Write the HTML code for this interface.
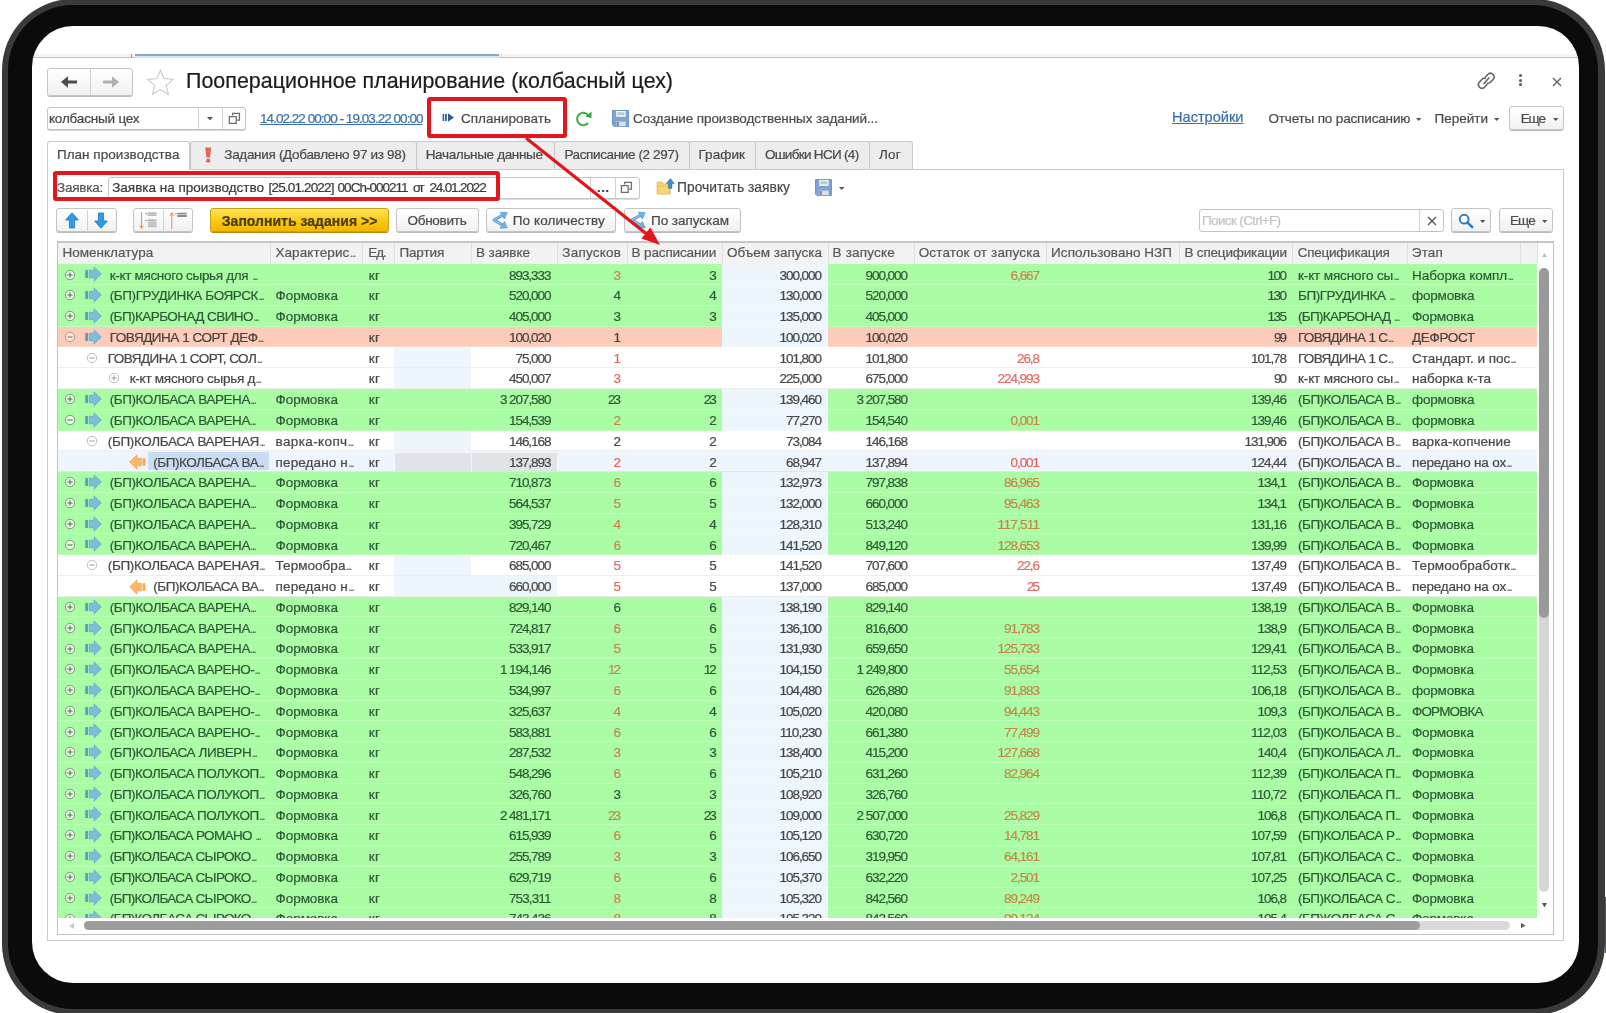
<!DOCTYPE html>
<html lang="ru"><head><meta charset="utf-8"><title>Пооперационное планирование</title>
<style>
html,body{margin:0;padding:0;background:#fff}
body{width:1606px;height:1013px;position:relative;overflow:hidden;font-family:"Liberation Sans",Arial,sans-serif;font-size:13.5px;-webkit-text-stroke:0.22px currentColor}
#tablet{position:absolute;left:1.5px;top:-1px;width:1603px;height:1015.7px;background:#3a3a3a;border-radius:71px}
#tablet2{position:absolute;left:8px;top:4.7px;width:1590px;height:1004.3px;background:#0b0b0b;border-radius:65px}
#btn{position:absolute;left:1604.5px;top:897px;width:1.5px;height:56px;background:#5a5f66}
#screen{position:absolute;left:32px;top:26px;width:1547px;height:957px;background:#fff;border-radius:41px;overflow:hidden}
#in{position:absolute;left:-32px;top:-26px;width:1606px;height:1013px;will-change:transform}
.e{font-size:11.5px;letter-spacing:-1.6px;margin-left:0.4px;opacity:.8}
</style></head><body>
<div id="tablet"></div><div id="tablet2"></div><div id="btn"></div>
<div id="screen"><div id="in">
<div style="position:absolute;left:32.0px;top:54.0px;width:1547.0px;height:3.0px;background:#f3f3f3"></div>
<div style="position:absolute;left:32.0px;top:57.0px;width:1547.0px;height:1.0px;background:#c2c2c2"></div>
<div style="position:absolute;left:134.6px;top:54.0px;width:364.4px;height:2.0px;background:#8ea7bd"></div>
<div style="position:absolute;left:134.6px;top:56.0px;width:364.4px;height:2.0px;background:#d6e4ef"></div>
<div style="position:absolute;left:131.0px;top:54.0px;width:1.0px;height:4.0px;background:#999"></div>
<div style="position:absolute;left:501.0px;top:54.0px;width:1.0px;height:4.0px;background:#ccc"></div>
<div style="position:absolute;left:47.0px;top:67.5px;width:85.5px;height:28.0px;box-sizing:border-box;border:1px solid #c3c3c3;border-radius:3px;background:linear-gradient(#ffffff,#f1f1f1);box-shadow:0 1px 0 #b9b9b9;"></div>
<div style="position:absolute;left:90.0px;top:68.5px;width:1.0px;height:26.0px;background:#d0d0d0"></div>
<svg style="position:absolute;left:60.0px;top:75.0px" width="18" height="14" viewBox="0 0 18 14"><path d="M1 7L8 1.2V5.4H17V8.6H8V12.8Z" fill="#4a4a4a"/></svg>
<svg style="position:absolute;left:102.0px;top:75.0px" width="18" height="14" viewBox="0 0 18 14"><path d="M17 7L10 1.2V5.4H1V8.6H10V12.8Z" fill="#b0b0b0"/></svg>
<svg style="position:absolute;left:145.5px;top:67.5px" width="29" height="28" viewBox="0 0 29 28"><path d="M14.5 2.2L18.1 10.6L27.2 11.4L20.3 17.4L22.4 26.3L14.5 21.6L6.6 26.3L8.7 17.4L1.8 11.4L10.9 10.6Z" fill="none" stroke="#c9c9c9" stroke-width="1.1" stroke-linejoin="miter"/></svg>
<div style="position:absolute;left:186.0px;top:71.48px;font-size:21.4px;line-height:1;color:#1c1c1c;white-space:pre;letter-spacing:0.039px;">Пооперационное планирование (колбасный цех)</div>
<svg style="position:absolute;left:1474.5px;top:70.2px" width="22" height="20.9" viewBox="0 0 20 19"><g fill="none" stroke="#666" stroke-width="1.45" stroke-linecap="round"><path d="M8.2 12.3L12.6 7.2"/><path d="M9.6 6.4L11.6 4.1A3.3 3.3 0 0 1 16.6 8.4L14.3 11A3.3 3.3 0 0 1 11.2 12"/><path d="M10.9 13.2L8.9 15.5A3.3 3.3 0 0 1 3.9 11.2L6.2 8.6A3.3 3.3 0 0 1 9.3 7.6"/></g></svg>
<div style="position:absolute;left:1519.2px;top:74.0px;width:3.0px;height:3.0px;background:#5a5a5a;border-radius:50%"></div>
<div style="position:absolute;left:1519.2px;top:78.5px;width:3.0px;height:3.0px;background:#5a5a5a;border-radius:50%"></div>
<div style="position:absolute;left:1519.2px;top:83.0px;width:3.0px;height:3.0px;background:#5a5a5a;border-radius:50%"></div>
<svg style="position:absolute;left:1551.5px;top:76.5px" width="10" height="10" viewBox="0 0 10 10"><path d="M1 1L9 9M9 1L1 9" stroke="#6a6a6a" stroke-width="1.5" fill="none"/></svg>
<div style="position:absolute;left:47.0px;top:107.0px;width:199.0px;height:23.0px;box-sizing:border-box;border:1px solid #c3c3c3;border-radius:3px;background:#fff;box-shadow:0 1px 0 #d5d5d5"></div>
<div style="position:absolute;left:198.0px;top:108.0px;width:1.0px;height:21.0px;background:#d0d0d0"></div>
<div style="position:absolute;left:222.0px;top:108.0px;width:1.0px;height:21.0px;background:#d0d0d0"></div>
<div style="position:absolute;left:49.0px;top:111.87px;font-size:13.5px;line-height:1;color:#474747;white-space:pre;letter-spacing:-0.186px;">колбасный цех</div>
<svg style="position:absolute;left:206.5px;top:116.9px" width="6" height="3.4" viewBox="0 0 6 3.4"><path d="M0 0H6L3.0 3.4Z" fill="#555"/></svg>
<svg style="position:absolute;left:227.6px;top:111.6px" width="13" height="13" viewBox="0 0 13 13"><g fill="none" stroke="#6f6f6f" stroke-width="1.3"><path d="M4.6 3.6V1.4H11.4V8.2H9"/><rect x="1.4" y="4.6" width="6.8" height="6.8" fill="#fff"/></g></svg>
<div style="position:absolute;left:260.0px;top:111.87px;font-size:13.5px;line-height:1;color:#3a6fb0;white-space:pre;letter-spacing:-0.956px;text-decoration:underline;">14.02.22 00:00 - 19.03.22 00:00</div>
<div style="position:absolute;left:426.5px;top:97.0px;width:140.0px;height:41.0px;box-sizing:border-box;border:4px solid #e2161c;border-radius:3px"></div>
<svg style="position:absolute;left:441.5px;top:112.0px" width="13" height="11" viewBox="0 0 13 11"><rect x="0.6" y="2" width="1.6" height="7" fill="#2f5f94"/><rect x="3.1" y="2" width="1.8" height="7" fill="#2f5f94"/><path d="M6 1.2L12 5.5L6 9.8Z" fill="#2f5f94"/></svg>
<div style="position:absolute;left:461.0px;top:111.87px;font-size:13.5px;line-height:1;color:#4b4b4b;white-space:pre;letter-spacing:0.009px;">Спланировать</div>
<svg style="position:absolute;left:574.0px;top:109.7px" width="19" height="18" viewBox="0 0 19 18"><path d="M14.05 12.99A6.2 6.2 0 1 1 14.05 5.01" fill="none" stroke="#47ab48" stroke-width="2.1"/><path d="M11.4 6.6L17.6 1.6L17.4 8.3Z" fill="#3da33f"/></svg>
<svg style="position:absolute;left:611.8px;top:110.0px" width="17" height="17" viewBox="0 0 17 17"><path d="M0.5 0.5H16.5V16.5H2L0.5 15Z" fill="#7fa3d3" stroke="#6a8fc5" stroke-width="0.9"/><rect x="4.2" y="1" width="9.4" height="5.8" fill="#f4f7fb"/><rect x="5.4" y="2.2" width="7" height="3" fill="#b9c8de"/><rect x="4.6" y="11.6" width="9" height="4.6" fill="#dcdfe4"/><rect x="5.2" y="12" width="1.4" height="4" fill="#4c6a94"/></svg>
<div style="position:absolute;left:633.0px;top:111.87px;font-size:13.5px;line-height:1;color:#4b4b4b;white-space:pre;letter-spacing:-0.093px;">Создание производственных заданий...</div>
<div style="position:absolute;left:1172.0px;top:109.94px;font-size:14.6px;line-height:1;color:#3a6fa8;white-space:pre;letter-spacing:-0.008px;text-decoration:underline;">Настройки</div>
<div style="position:absolute;left:1268.4px;top:111.87px;font-size:13.5px;line-height:1;color:#4b4b4b;white-space:pre;letter-spacing:-0.157px;">Отчеты по расписанию</div>
<svg style="position:absolute;left:1416.3px;top:118.0px" width="5.4" height="3" viewBox="0 0 5.4 3"><path d="M0 0H5.4L2.7 3Z" fill="#555"/></svg>
<div style="position:absolute;left:1434.5px;top:111.87px;font-size:13.5px;line-height:1;color:#4b4b4b;white-space:pre;letter-spacing:0.000px;">Перейти</div>
<svg style="position:absolute;left:1493.8px;top:118.0px" width="5.4" height="3" viewBox="0 0 5.4 3"><path d="M0 0H5.4L2.7 3Z" fill="#555"/></svg>
<div style="position:absolute;left:1509.0px;top:106.0px;width:54.5px;height:24.0px;box-sizing:border-box;border:1px solid #c3c3c3;border-radius:3px;background:linear-gradient(#ffffff,#f1f1f1);box-shadow:0 1px 0 #b9b9b9;"></div>
<div style="position:absolute;left:1520.7px;top:111.87px;font-size:13.5px;line-height:1;color:#4b4b4b;white-space:pre;letter-spacing:-1.084px;">Еще</div>
<svg style="position:absolute;left:1552.8px;top:118.0px" width="5.4" height="3" viewBox="0 0 5.4 3"><path d="M0 0H5.4L2.7 3Z" fill="#555"/></svg>
<div style="position:absolute;left:46.5px;top:169.0px;width:1517.0px;height:771.5px;box-sizing:border-box;border:1px solid #c9c9c9;background:#fff"></div>
<div style="position:absolute;left:190.0px;top:140.5px;width:226.5px;height:28.5px;box-sizing:border-box;border:1px solid #c9c9c9;border-bottom:none;border-radius:3px 3px 0 0;background:#ededed"></div>
<div style="position:absolute;left:415.5px;top:140.5px;width:139.5px;height:28.5px;box-sizing:border-box;border:1px solid #c9c9c9;border-bottom:none;border-radius:3px 3px 0 0;background:#ededed"></div>
<div style="position:absolute;left:554.0px;top:140.5px;width:136.0px;height:28.5px;box-sizing:border-box;border:1px solid #c9c9c9;border-bottom:none;border-radius:3px 3px 0 0;background:#ededed"></div>
<div style="position:absolute;left:689.0px;top:140.5px;width:67.0px;height:28.5px;box-sizing:border-box;border:1px solid #c9c9c9;border-bottom:none;border-radius:3px 3px 0 0;background:#ededed"></div>
<div style="position:absolute;left:755.0px;top:140.5px;width:115.0px;height:28.5px;box-sizing:border-box;border:1px solid #c9c9c9;border-bottom:none;border-radius:3px 3px 0 0;background:#ededed"></div>
<div style="position:absolute;left:869.0px;top:140.5px;width:43.5px;height:28.5px;box-sizing:border-box;border:1px solid #c9c9c9;border-bottom:none;border-radius:3px 3px 0 0;background:#ededed"></div>
<div style="position:absolute;left:46.5px;top:140.5px;width:143.5px;height:29.5px;box-sizing:border-box;border:1px solid #c9c9c9;border-bottom:none;border-radius:3px 3px 0 0;background:#fff"></div>
<div style="position:absolute;left:56.9px;top:148.37px;font-size:13.5px;line-height:1;color:#4b4b4b;white-space:pre;letter-spacing:0.036px;">План производства</div>
<svg style="position:absolute;left:203.0px;top:145.5px" width="10" height="19" viewBox="0 0 10 19"><path d="M2.2 1.6H8.2L7 11.4H3.4Z" fill="#e8645a"/><rect x="3.2" y="12.8" width="4" height="3.6" rx="1.2" fill="#e8645a"/></svg>
<div style="position:absolute;left:224.3px;top:148.37px;font-size:13.5px;line-height:1;color:#4b4b4b;white-space:pre;letter-spacing:-0.310px;">Задания (Добавлено 97 из 98)</div>
<div style="position:absolute;left:425.7px;top:148.37px;font-size:13.5px;line-height:1;color:#4b4b4b;white-space:pre;letter-spacing:-0.336px;">Начальные данные</div>
<div style="position:absolute;left:564.4px;top:148.37px;font-size:13.5px;line-height:1;color:#4b4b4b;white-space:pre;letter-spacing:-0.374px;">Расписание (2 297)</div>
<div style="position:absolute;left:698.4px;top:148.37px;font-size:13.5px;line-height:1;color:#4b4b4b;white-space:pre;letter-spacing:0.095px;">График</div>
<div style="position:absolute;left:764.9px;top:148.37px;font-size:13.5px;line-height:1;color:#4b4b4b;white-space:pre;letter-spacing:-0.690px;">Ошибки НСИ (4)</div>
<div style="position:absolute;left:879.0px;top:148.37px;font-size:13.5px;line-height:1;color:#4b4b4b;white-space:pre;letter-spacing:0.252px;">Лог</div>
<div style="position:absolute;left:57.0px;top:180.87px;font-size:13.5px;line-height:1;color:#555;white-space:pre;letter-spacing:-0.235px;">Заявка:</div>
<div style="position:absolute;left:108.0px;top:176.5px;width:532.0px;height:22.5px;box-sizing:border-box;border:1px solid #c6c6c6;border-radius:3px;background:#fff;box-shadow:0 1px 0 #dcdcdc"></div>
<div style="position:absolute;left:590.0px;top:177.5px;width:1.0px;height:20.5px;background:#d0d0d0"></div>
<div style="position:absolute;left:615.0px;top:177.5px;width:1.0px;height:20.5px;background:#d0d0d0"></div>
<div style="position:absolute;left:112.2px;top:180.87px;font-size:13.5px;line-height:1;color:#3a3a3a;white-space:pre;letter-spacing:-0.003px;">Заявка на производство</div>
<div style="position:absolute;left:268.6px;top:180.87px;font-size:13.5px;line-height:1;color:#3a3a3a;white-space:pre;letter-spacing:-0.843px;">[25.01.2022]</div>
<div style="position:absolute;left:337.6px;top:180.87px;font-size:13.5px;line-height:1;color:#3a3a3a;white-space:pre;letter-spacing:-0.983px;">00Ch-000211</div>
<div style="position:absolute;left:413.0px;top:180.87px;font-size:13.5px;line-height:1;color:#3a3a3a;white-space:pre;letter-spacing:-1.606px;">от</div>
<div style="position:absolute;left:429.4px;top:180.87px;font-size:13.5px;line-height:1;color:#3a3a3a;white-space:pre;letter-spacing:-1.142px;">24.01.2022</div>
<div style="position:absolute;left:597.0px;top:181.37px;font-size:13.5px;line-height:1;color:#444;white-space:pre;font-weight:bold;letter-spacing:0.4px;">...</div>
<svg style="position:absolute;left:620.3px;top:180.6px" width="13" height="13" viewBox="0 0 13 13"><g fill="none" stroke="#6f6f6f" stroke-width="1.3"><path d="M4.6 3.6V1.4H11.4V8.2H9"/><rect x="1.4" y="4.6" width="6.8" height="6.8" fill="#fff"/></g></svg>
<div style="position:absolute;left:52.5px;top:170.5px;width:447.5px;height:30.0px;box-sizing:border-box;border:4px solid #e2161c;border-radius:3px"></div>
<svg style="position:absolute;left:656.0px;top:177.5px" width="19" height="18" viewBox="0 0 19 18"><path d="M1.2 4.2H6L7.4 6H14V16H1.2Z" fill="#f6d572" stroke="#e2b84a" stroke-width="0.9"/><path d="M1.6 8.4H13.6" stroke="#e9c45c" stroke-width="0.9"/><path d="M14.4 0.6L18.4 5.6H16V10.4H12.6V5.6H10.2Z" fill="#3f8bd0" stroke="#2c6fb0" stroke-width="0.5"/></svg>
<div style="position:absolute;left:677.0px;top:181.12px;font-size:13.8px;line-height:1;color:#4b4b4b;white-space:pre;letter-spacing:0.025px;">Прочитать заявку</div>
<svg style="position:absolute;left:815.0px;top:179.2px" width="17" height="17" viewBox="0 0 17 17"><path d="M0.5 0.5H16.5V16.5H2L0.5 15Z" fill="#7fa3d3" stroke="#6a8fc5" stroke-width="0.9"/><rect x="4.2" y="1" width="9.4" height="5.8" fill="#f4f7fb"/><rect x="5.4" y="2.2" width="7" height="3" fill="#b9c8de"/><rect x="4.6" y="11.6" width="9" height="4.6" fill="#dcdfe4"/><rect x="5.2" y="12" width="1.4" height="4" fill="#4c6a94"/></svg>
<svg style="position:absolute;left:838.5px;top:187.0px" width="5.4" height="3" viewBox="0 0 5.4 3"><path d="M0 0H5.4L2.7 3Z" fill="#555"/></svg>
<div style="position:absolute;left:56.4px;top:208.0px;width:60.4px;height:24.0px;box-sizing:border-box;border:1px solid #c3c3c3;border-radius:3px;background:linear-gradient(#ffffff,#f1f1f1);box-shadow:0 1px 0 #b9b9b9;"></div>
<div style="position:absolute;left:86.6px;top:209.5px;width:1.0px;height:22.0px;background:#d0d0d0"></div>
<svg style="position:absolute;left:64.5px;top:212.0px" width="14" height="17" viewBox="0 0 14 17"><path d="M7 0.8L13.4 8H9.6V16H4.4V8H0.6Z" fill="#2f9be6" stroke="#1f78c0" stroke-width="0.8"/></svg>
<svg style="position:absolute;left:94.0px;top:212.0px" width="14" height="17" viewBox="0 0 14 17"><path d="M7 16.2L13.4 9H9.6V1H4.4V9H0.6Z" fill="#2f9be6" stroke="#1f78c0" stroke-width="0.8"/></svg>
<div style="position:absolute;left:133.0px;top:208.0px;width:60.4px;height:24.0px;box-sizing:border-box;border:1px solid #c3c3c3;border-radius:3px;background:linear-gradient(#ffffff,#f1f1f1);box-shadow:0 1px 0 #b9b9b9;"></div>
<div style="position:absolute;left:163.3px;top:209.5px;width:1.0px;height:22.0px;background:#d0d0d0"></div>
<svg style="position:absolute;left:139.0px;top:211.0px" width="20" height="19" viewBox="0 0 20 19"><path d="M2.6 1V17M0.8 14.5L2.6 17.5L4.4 14.5" stroke="#ee8a4a" stroke-width="1" fill="none"/><g fill="#8a8a8a"><rect x="6.5" y="2" width="1.3" height="1.3"/><rect x="8.5" y="1.6" width="9" height="1"/><rect x="8.5" y="3.6" width="9" height="1"/><rect x="6.5" y="9" width="1.3" height="1.3"/><rect x="8.5" y="8.6" width="9" height="1"/><rect x="9" y="10.4" width="8.5" height="6" fill="#c4c4c4"/></g></svg>
<svg style="position:absolute;left:168.5px;top:211.0px" width="20" height="19" viewBox="0 0 20 19"><path d="M2.8 18V2M1 4.8L2.8 1.6L4.6 4.8" stroke="#ee8a4a" stroke-width="1" fill="none"/><g fill="#8a8a8a"><rect x="6.3" y="2.2" width="1.3" height="1.3"/><rect x="8.3" y="1.8" width="9.5" height="1.2"/><rect x="8.3" y="3.6" width="9.5" height="2.4"/></g></svg>
<div style="position:absolute;left:210.0px;top:208.0px;width:179.0px;height:24.0px;box-sizing:border-box;border:1px solid #c79f10;border-radius:3px;background:linear-gradient(#ffe45a,#fbc90f 55%,#f3b600);box-shadow:0 1px 0 #b48e0a"></div>
<div style="position:absolute;left:221.8px;top:213.95px;font-size:14px;line-height:1;color:#4a3c0a;white-space:pre;letter-spacing:0.019px;font-weight:bold;">Заполнить задания &gt;&gt;</div>
<div style="position:absolute;left:396.0px;top:208.0px;width:82.5px;height:24.0px;box-sizing:border-box;border:1px solid #c3c3c3;border-radius:3px;background:linear-gradient(#ffffff,#f1f1f1);box-shadow:0 1px 0 #b9b9b9;"></div>
<div style="position:absolute;left:407.5px;top:214.37px;font-size:13.5px;line-height:1;color:#4b4b4b;white-space:pre;letter-spacing:-0.277px;">Обновить</div>
<div style="position:absolute;left:485.5px;top:208.0px;width:130.5px;height:24.0px;box-sizing:border-box;border:1px solid #c3c3c3;border-radius:3px;background:linear-gradient(#ffffff,#f1f1f1);box-shadow:0 1px 0 #b9b9b9;"></div>
<svg style="position:absolute;left:491.3px;top:211.3px" width="18" height="18.4" viewBox="0 0 18 18.4"><path d="M12 4L3 9L12 14.6" fill="none" stroke="#4f98d2" stroke-width="3" stroke-linejoin="round"/><path d="M12 4L3 9L12 14.6" fill="none" stroke="#8cc4ea" stroke-width="1.4" stroke-linejoin="round"/><path d="M9.2 1.2L16.2 1.6L13.4 8Z" fill="#6fb2e3" stroke="#4f98d2" stroke-width="0.7"/><path d="M9.2 17.2L16.2 16.8L13.4 10.6Z" fill="#6fb2e3" stroke="#4f98d2" stroke-width="0.7"/></svg>
<div style="position:absolute;left:512.8px;top:214.37px;font-size:13.5px;line-height:1;color:#4b4b4b;white-space:pre;letter-spacing:0.096px;">По количеству</div>
<div style="position:absolute;left:623.5px;top:208.0px;width:117.5px;height:24.0px;box-sizing:border-box;border:1px solid #c3c3c3;border-radius:3px;background:linear-gradient(#ffffff,#f1f1f1);box-shadow:0 1px 0 #b9b9b9;"></div>
<svg style="position:absolute;left:629.3px;top:211.3px" width="18" height="18.4" viewBox="0 0 18 18.4"><path d="M12 4L3 9L12 14.6" fill="none" stroke="#4f98d2" stroke-width="3" stroke-linejoin="round"/><path d="M12 4L3 9L12 14.6" fill="none" stroke="#8cc4ea" stroke-width="1.4" stroke-linejoin="round"/><path d="M9.2 1.2L16.2 1.6L13.4 8Z" fill="#6fb2e3" stroke="#4f98d2" stroke-width="0.7"/><path d="M9.2 17.2L16.2 16.8L13.4 10.6Z" fill="#6fb2e3" stroke="#4f98d2" stroke-width="0.7"/></svg>
<div style="position:absolute;left:651.0px;top:214.37px;font-size:13.5px;line-height:1;color:#4b4b4b;white-space:pre;letter-spacing:-0.031px;">По запускам</div>
<div style="position:absolute;left:1198.7px;top:209.0px;width:245.0px;height:23.0px;box-sizing:border-box;border:1px solid #c3c3c3;border-radius:3px;background:#fff"></div>
<div style="position:absolute;left:1418.6px;top:210.0px;width:1.0px;height:21.0px;background:#d0d0d0"></div>
<div style="position:absolute;left:1202.0px;top:214.37px;font-size:13.5px;line-height:1;color:#c4c4c4;white-space:pre;letter-spacing:-0.637px;">Поиск (Ctrl+F)</div>
<svg style="position:absolute;left:1426.5px;top:216.0px" width="10" height="10" viewBox="0 0 10 10"><path d="M1 1L9 9M9 1L1 9" stroke="#555" stroke-width="1.4" fill="none"/></svg>
<div style="position:absolute;left:1451.0px;top:208.0px;width:40.0px;height:24.0px;box-sizing:border-box;border:1px solid #c3c3c3;border-radius:3px;background:linear-gradient(#ffffff,#f1f1f1);box-shadow:0 1px 0 #b9b9b9;"></div>
<svg style="position:absolute;left:1457.5px;top:212.5px" width="16" height="16" viewBox="0 0 16 16"><circle cx="6.2" cy="6.2" r="4.4" fill="#fff" stroke="#2f7cc4" stroke-width="2"/><path d="M9.6 9.6L14.2 14.2" stroke="#2f7cc4" stroke-width="2.6" stroke-linecap="round"/></svg>
<svg style="position:absolute;left:1480.3px;top:220.0px" width="5.4" height="3" viewBox="0 0 5.4 3"><path d="M0 0H5.4L2.7 3Z" fill="#555"/></svg>
<div style="position:absolute;left:1498.8px;top:208.0px;width:54.2px;height:24.0px;box-sizing:border-box;border:1px solid #c3c3c3;border-radius:3px;background:linear-gradient(#ffffff,#f1f1f1);box-shadow:0 1px 0 #b9b9b9;"></div>
<div style="position:absolute;left:1510.0px;top:214.37px;font-size:13.5px;line-height:1;color:#4b4b4b;white-space:pre;letter-spacing:-0.884px;">Еще</div>
<svg style="position:absolute;left:1542.3px;top:220.0px" width="5.4" height="3" viewBox="0 0 5.4 3"><path d="M0 0H5.4L2.7 3Z" fill="#555"/></svg>
<div style="position:absolute;left:56.5px;top:241.0px;width:1497.0px;height:693.5px;box-sizing:border-box;border:1px solid #c2c2c2;border-top:2px solid #c6c6c6;background:#fff"></div>
<div style="position:absolute;left:57.5px;top:243.0px;width:1479.1px;height:21.0px;background:#f2f2f2"></div>
<div style="position:absolute;left:270.0px;top:243.0px;width:1.0px;height:20.0px;background:#dedede"></div>
<div style="position:absolute;left:362.0px;top:243.0px;width:1.0px;height:20.0px;background:#dedede"></div>
<div style="position:absolute;left:394.0px;top:243.0px;width:1.0px;height:20.0px;background:#dedede"></div>
<div style="position:absolute;left:471.0px;top:243.0px;width:1.0px;height:20.0px;background:#dedede"></div>
<div style="position:absolute;left:557.0px;top:243.0px;width:1.0px;height:20.0px;background:#dedede"></div>
<div style="position:absolute;left:627.0px;top:243.0px;width:1.0px;height:20.0px;background:#dedede"></div>
<div style="position:absolute;left:722.0px;top:243.0px;width:1.0px;height:20.0px;background:#dedede"></div>
<div style="position:absolute;left:828.0px;top:243.0px;width:1.0px;height:20.0px;background:#dedede"></div>
<div style="position:absolute;left:914.0px;top:243.0px;width:1.0px;height:20.0px;background:#dedede"></div>
<div style="position:absolute;left:1046.0px;top:243.0px;width:1.0px;height:20.0px;background:#dedede"></div>
<div style="position:absolute;left:1179.0px;top:243.0px;width:1.0px;height:20.0px;background:#dedede"></div>
<div style="position:absolute;left:1292.0px;top:243.0px;width:1.0px;height:20.0px;background:#dedede"></div>
<div style="position:absolute;left:1407.0px;top:243.0px;width:1.0px;height:20.0px;background:#dedede"></div>
<div style="position:absolute;left:1520.0px;top:243.0px;width:1.0px;height:20.0px;background:#dedede"></div>
<div style="position:absolute;left:1537.0px;top:243.0px;width:1.0px;height:20.0px;background:#dedede"></div>
<div style="position:absolute;left:62.4px;top:245.87px;font-size:13.5px;line-height:1;color:#585858;white-space:pre;letter-spacing:0.026px;">Номенклатура</div>
<div style="position:absolute;left:275.4px;top:245.87px;font-size:13.5px;line-height:1;color:#585858;white-space:pre;letter-spacing:0.107px;">Характерис<span class="e">...</span></div>
<div style="position:absolute;left:368.3px;top:245.87px;font-size:13.5px;line-height:1;color:#585858;white-space:pre;letter-spacing:-1.120px;">Ед.</div>
<div style="position:absolute;left:399.4px;top:245.87px;font-size:13.5px;line-height:1;color:#585858;white-space:pre;letter-spacing:-0.114px;">Партия</div>
<div style="position:absolute;left:475.9px;top:245.87px;font-size:13.5px;line-height:1;color:#585858;white-space:pre;letter-spacing:-0.059px;">В заявке</div>
<div style="position:absolute;left:562.3px;top:245.87px;font-size:13.5px;line-height:1;color:#585858;white-space:pre;letter-spacing:0.234px;">Запусков</div>
<div style="position:absolute;left:631.6px;top:245.87px;font-size:13.5px;line-height:1;color:#585858;white-space:pre;letter-spacing:-0.143px;">В расписании</div>
<div style="position:absolute;left:726.9px;top:245.87px;font-size:13.5px;line-height:1;color:#585858;white-space:pre;letter-spacing:0.021px;">Объем запуска</div>
<div style="position:absolute;left:832.5px;top:245.87px;font-size:13.5px;line-height:1;color:#585858;white-space:pre;letter-spacing:0.202px;">В запуске</div>
<div style="position:absolute;left:918.7px;top:245.87px;font-size:13.5px;line-height:1;color:#585858;white-space:pre;letter-spacing:0.141px;">Остаток от запуска</div>
<div style="position:absolute;left:1051.1px;top:245.87px;font-size:13.5px;line-height:1;color:#585858;white-space:pre;letter-spacing:0.041px;">Использовано НЗП</div>
<div style="position:absolute;left:1184.4px;top:245.87px;font-size:13.5px;line-height:1;color:#585858;white-space:pre;letter-spacing:-0.168px;">В спецификации</div>
<div style="position:absolute;left:1297.7px;top:245.87px;font-size:13.5px;line-height:1;color:#585858;white-space:pre;letter-spacing:-0.236px;">Спецификация</div>
<div style="position:absolute;left:1411.8px;top:245.87px;font-size:13.5px;line-height:1;color:#585858;white-space:pre;letter-spacing:0.146px;">Этап</div>
<div style="position:absolute;left:0;top:0;width:1606px;height:918px;overflow:hidden">
<div style="position:absolute;left:57.5px;top:264.0px;width:664.5px;height:21.0px;background:#abfda5"></div>
<div style="position:absolute;left:722.0px;top:264.0px;width:105.8px;height:21.0px;background:#edf5fd"></div>
<div style="position:absolute;left:827.8px;top:264.0px;width:708.8px;height:21.0px;background:#abfda5"></div>
<div style="position:absolute;left:57.5px;top:284.0px;width:1479.1px;height:2.0px;background:rgba(255,255,255,0.22)"></div>
<svg style="position:absolute;left:64.4px;top:268.6px" width="12" height="12" viewBox="0 0 12 12"><circle cx="6" cy="6" r="4.7" fill="#e4fbe1" stroke="#7f9a80" stroke-width="1"/><path d="M3.4 6H8.6M6 3.4V8.6" stroke="#4f6a50" stroke-width="1"/></svg>
<svg style="position:absolute;left:85.0px;top:266.4px" width="17" height="16" viewBox="0 0 17 16"><rect x="0.2" y="4" width="2.8" height="8" rx="0.6" fill="#5a9fc2"/><path d="M4.2 4.2H9V0.8L16.4 8L9 15.2V11.8H4.2Z" fill="#7ebcd8" stroke="#66a9cb" stroke-width="0.7" stroke-linejoin="round"/></svg>
<div style="position:absolute;left:109.7px;top:268.57px;font-size:13.5px;line-height:1;color:#2d5a36;white-space:pre;letter-spacing:-0.321px;">к-кт мясного сырья для <span class="e">...</span></div>
<div style="position:absolute;left:368.8px;top:268.57px;font-size:13.5px;line-height:1;color:#2d5a36;white-space:pre;letter-spacing:0.356px;">кг</div>
<div style="position:absolute;right:1055.67px;top:268.57px;font-size:13.5px;line-height:1;color:#2d5a36;white-space:pre;letter-spacing:-1.069px;">893,333</div>
<div style="position:absolute;right:985.00px;top:268.57px;font-size:13.5px;line-height:1;color:#c0894a;white-space:pre;letter-spacing:0.000px;">3</div>
<div style="position:absolute;right:889.30px;top:268.57px;font-size:13.5px;line-height:1;color:#2d5a36;white-space:pre;letter-spacing:0.000px;">3</div>
<div style="position:absolute;right:785.07px;top:268.57px;font-size:13.5px;line-height:1;color:#454545;white-space:pre;letter-spacing:-1.069px;">300,000</div>
<div style="position:absolute;right:699.07px;top:268.57px;font-size:13.5px;line-height:1;color:#2d5a36;white-space:pre;letter-spacing:-1.069px;">900,000</div>
<div style="position:absolute;right:567.10px;top:268.57px;font-size:13.5px;line-height:1;color:#c0894a;white-space:pre;letter-spacing:-1.099px;">6,667</div>
<div style="position:absolute;right:320.52px;top:268.57px;font-size:13.5px;line-height:1;color:#2d5a36;white-space:pre;letter-spacing:-1.516px;">100</div>
<div style="position:absolute;left:1298.0px;top:268.57px;font-size:13.5px;line-height:1;color:#2d5a36;white-space:pre;letter-spacing:-0.125px;">к-кт мясного сы<span class="e">...</span></div>
<div style="position:absolute;left:1412.0px;top:268.57px;font-size:13.5px;line-height:1;color:#2d5a36;white-space:pre;letter-spacing:-0.026px;">Наборка компл<span class="e">...</span></div>
<div style="position:absolute;left:57.5px;top:285.0px;width:664.5px;height:21.0px;background:#abfda5"></div>
<div style="position:absolute;left:722.0px;top:285.0px;width:105.8px;height:21.0px;background:#edf5fd"></div>
<div style="position:absolute;left:827.8px;top:285.0px;width:708.8px;height:21.0px;background:#abfda5"></div>
<div style="position:absolute;left:57.5px;top:305.0px;width:1479.1px;height:2.0px;background:rgba(255,255,255,0.22)"></div>
<svg style="position:absolute;left:64.4px;top:289.4px" width="12" height="12" viewBox="0 0 12 12"><circle cx="6" cy="6" r="4.7" fill="#e4fbe1" stroke="#7f9a80" stroke-width="1"/><path d="M3.4 6H8.6M6 3.4V8.6" stroke="#4f6a50" stroke-width="1"/></svg>
<svg style="position:absolute;left:85.0px;top:287.2px" width="17" height="16" viewBox="0 0 17 16"><rect x="0.2" y="4" width="2.8" height="8" rx="0.6" fill="#5a9fc2"/><path d="M4.2 4.2H9V0.8L16.4 8L9 15.2V11.8H4.2Z" fill="#7ebcd8" stroke="#66a9cb" stroke-width="0.7" stroke-linejoin="round"/></svg>
<div style="position:absolute;left:109.7px;top:289.34px;font-size:13.5px;line-height:1;color:#2d5a36;white-space:pre;letter-spacing:-0.394px;">(БП)ГРУДИНКА БОЯРСК<span class="e">...</span></div>
<div style="position:absolute;left:275.6px;top:289.34px;font-size:13.5px;line-height:1;color:#2d5a36;white-space:pre;letter-spacing:-0.079px;">Формовка</div>
<div style="position:absolute;left:368.8px;top:289.34px;font-size:13.5px;line-height:1;color:#2d5a36;white-space:pre;letter-spacing:0.356px;">кг</div>
<div style="position:absolute;right:1055.67px;top:289.34px;font-size:13.5px;line-height:1;color:#2d5a36;white-space:pre;letter-spacing:-1.069px;">520,000</div>
<div style="position:absolute;right:985.00px;top:289.34px;font-size:13.5px;line-height:1;color:#2d5a36;white-space:pre;letter-spacing:0.000px;">4</div>
<div style="position:absolute;right:889.30px;top:289.34px;font-size:13.5px;line-height:1;color:#2d5a36;white-space:pre;letter-spacing:0.000px;">4</div>
<div style="position:absolute;right:785.07px;top:289.34px;font-size:13.5px;line-height:1;color:#454545;white-space:pre;letter-spacing:-1.069px;">130,000</div>
<div style="position:absolute;right:699.07px;top:289.34px;font-size:13.5px;line-height:1;color:#2d5a36;white-space:pre;letter-spacing:-1.069px;">520,000</div>
<div style="position:absolute;right:320.52px;top:289.34px;font-size:13.5px;line-height:1;color:#2d5a36;white-space:pre;letter-spacing:-1.516px;">130</div>
<div style="position:absolute;left:1298.0px;top:289.34px;font-size:13.5px;line-height:1;color:#2d5a36;white-space:pre;letter-spacing:-0.451px;">БП)ГРУДИНКА <span class="e">...</span></div>
<div style="position:absolute;left:1412.0px;top:289.34px;font-size:13.5px;line-height:1;color:#2d5a36;white-space:pre;letter-spacing:-0.171px;">формовка</div>
<div style="position:absolute;left:57.5px;top:306.0px;width:664.5px;height:21.0px;background:#abfda5"></div>
<div style="position:absolute;left:722.0px;top:306.0px;width:105.8px;height:21.0px;background:#edf5fd"></div>
<div style="position:absolute;left:827.8px;top:306.0px;width:708.8px;height:21.0px;background:#abfda5"></div>
<div style="position:absolute;left:57.5px;top:326.0px;width:1479.1px;height:2.0px;background:rgba(255,255,255,0.22)"></div>
<svg style="position:absolute;left:64.4px;top:310.1px" width="12" height="12" viewBox="0 0 12 12"><circle cx="6" cy="6" r="4.7" fill="#e4fbe1" stroke="#7f9a80" stroke-width="1"/><path d="M3.4 6H8.6M6 3.4V8.6" stroke="#4f6a50" stroke-width="1"/></svg>
<svg style="position:absolute;left:85.0px;top:307.9px" width="17" height="16" viewBox="0 0 17 16"><rect x="0.2" y="4" width="2.8" height="8" rx="0.6" fill="#5a9fc2"/><path d="M4.2 4.2H9V0.8L16.4 8L9 15.2V11.8H4.2Z" fill="#7ebcd8" stroke="#66a9cb" stroke-width="0.7" stroke-linejoin="round"/></svg>
<div style="position:absolute;left:109.7px;top:310.11px;font-size:13.5px;line-height:1;color:#2d5a36;white-space:pre;letter-spacing:-0.567px;">(БП)КАРБОНАД СВИНО<span class="e">...</span></div>
<div style="position:absolute;left:275.6px;top:310.11px;font-size:13.5px;line-height:1;color:#2d5a36;white-space:pre;letter-spacing:-0.079px;">Формовка</div>
<div style="position:absolute;left:368.8px;top:310.11px;font-size:13.5px;line-height:1;color:#2d5a36;white-space:pre;letter-spacing:0.356px;">кг</div>
<div style="position:absolute;right:1055.67px;top:310.11px;font-size:13.5px;line-height:1;color:#2d5a36;white-space:pre;letter-spacing:-1.069px;">405,000</div>
<div style="position:absolute;right:985.00px;top:310.11px;font-size:13.5px;line-height:1;color:#2d5a36;white-space:pre;letter-spacing:0.000px;">3</div>
<div style="position:absolute;right:889.30px;top:310.11px;font-size:13.5px;line-height:1;color:#2d5a36;white-space:pre;letter-spacing:0.000px;">3</div>
<div style="position:absolute;right:785.07px;top:310.11px;font-size:13.5px;line-height:1;color:#454545;white-space:pre;letter-spacing:-1.069px;">135,000</div>
<div style="position:absolute;right:699.07px;top:310.11px;font-size:13.5px;line-height:1;color:#2d5a36;white-space:pre;letter-spacing:-1.069px;">405,000</div>
<div style="position:absolute;right:320.52px;top:310.11px;font-size:13.5px;line-height:1;color:#2d5a36;white-space:pre;letter-spacing:-1.516px;">135</div>
<div style="position:absolute;left:1298.0px;top:310.11px;font-size:13.5px;line-height:1;color:#2d5a36;white-space:pre;letter-spacing:-0.703px;">(БП)КАРБОНАД <span class="e">...</span></div>
<div style="position:absolute;left:1412.0px;top:310.11px;font-size:13.5px;line-height:1;color:#2d5a36;white-space:pre;letter-spacing:-0.150px;">Формовка</div>
<div style="position:absolute;left:57.5px;top:327.0px;width:664.5px;height:20.0px;background:#fccbb9"></div>
<div style="position:absolute;left:722.0px;top:327.0px;width:105.8px;height:20.0px;background:#edf5fd"></div>
<div style="position:absolute;left:827.8px;top:327.0px;width:708.8px;height:20.0px;background:#fccbb9"></div>
<div style="position:absolute;left:57.5px;top:346.0px;width:1479.1px;height:2.0px;background:rgba(255,255,255,0.22)"></div>
<svg style="position:absolute;left:64.4px;top:330.9px" width="12" height="12" viewBox="0 0 12 12"><circle cx="6" cy="6" r="4.7" fill="#fde4da" stroke="#b79a90" stroke-width="1"/><path d="M3.4 6H8.6" stroke="#8a6a60" stroke-width="1"/></svg>
<svg style="position:absolute;left:85.0px;top:328.7px" width="17" height="16" viewBox="0 0 17 16"><rect x="0.2" y="4" width="2.8" height="8" rx="0.6" fill="#5a9fc2"/><path d="M4.2 4.2H9V0.8L16.4 8L9 15.2V11.8H4.2Z" fill="#7ebcd8" stroke="#66a9cb" stroke-width="0.7" stroke-linejoin="round"/></svg>
<div style="position:absolute;left:109.7px;top:330.88px;font-size:13.5px;line-height:1;color:#4a423f;white-space:pre;letter-spacing:-0.471px;">ГОВЯДИНА 1 СОРТ ДЕФ<span class="e">...</span></div>
<div style="position:absolute;left:368.8px;top:330.88px;font-size:13.5px;line-height:1;color:#4a423f;white-space:pre;letter-spacing:0.356px;">кг</div>
<div style="position:absolute;right:1055.67px;top:330.88px;font-size:13.5px;line-height:1;color:#4a423f;white-space:pre;letter-spacing:-1.069px;">100,020</div>
<div style="position:absolute;right:985.00px;top:330.88px;font-size:13.5px;line-height:1;color:#4a423f;white-space:pre;letter-spacing:0.000px;">1</div>
<div style="position:absolute;right:785.07px;top:330.88px;font-size:13.5px;line-height:1;color:#454545;white-space:pre;letter-spacing:-1.069px;">100,020</div>
<div style="position:absolute;right:699.07px;top:330.88px;font-size:13.5px;line-height:1;color:#4a423f;white-space:pre;letter-spacing:-1.069px;">100,020</div>
<div style="position:absolute;right:321.03px;top:330.88px;font-size:13.5px;line-height:1;color:#4a423f;white-space:pre;letter-spacing:-2.031px;">99</div>
<div style="position:absolute;left:1298.0px;top:330.88px;font-size:13.5px;line-height:1;color:#4a423f;white-space:pre;letter-spacing:-0.702px;">ГОВЯДИНА 1 С<span class="e">...</span></div>
<div style="position:absolute;left:1412.0px;top:330.88px;font-size:13.5px;line-height:1;color:#4a423f;white-space:pre;letter-spacing:-0.329px;">ДЕФРОСТ</div>
<div style="position:absolute;left:394.0px;top:347.0px;width:77.0px;height:21.0px;background:#edf5fd"></div>
<div style="position:absolute;left:57.5px;top:367.0px;width:1479.1px;height:1.0px;background:#eeeeee"></div>
<svg style="position:absolute;left:85.7px;top:351.7px" width="12" height="12" viewBox="0 0 12 12"><circle cx="6" cy="6" r="4.7" fill="#fff" stroke="#bdbdbd" stroke-width="1"/><path d="M3.4 6H8.6" stroke="#9a9a9a" stroke-width="1"/></svg>
<div style="position:absolute;left:107.8px;top:351.65px;font-size:13.5px;line-height:1;color:#484848;white-space:pre;letter-spacing:-0.539px;">ГОВЯДИНА 1 СОРТ, СОЛ<span class="e">...</span></div>
<div style="position:absolute;left:368.8px;top:351.65px;font-size:13.5px;line-height:1;color:#484848;white-space:pre;letter-spacing:0.356px;">кг</div>
<div style="position:absolute;right:1055.68px;top:351.65px;font-size:13.5px;line-height:1;color:#484848;white-space:pre;letter-spacing:-1.079px;">75,000</div>
<div style="position:absolute;right:985.00px;top:351.65px;font-size:13.5px;line-height:1;color:#e26a66;white-space:pre;letter-spacing:0.000px;">1</div>
<div style="position:absolute;right:785.07px;top:351.65px;font-size:13.5px;line-height:1;color:#484848;white-space:pre;letter-spacing:-1.069px;">101,800</div>
<div style="position:absolute;right:699.07px;top:351.65px;font-size:13.5px;line-height:1;color:#484848;white-space:pre;letter-spacing:-1.069px;">101,800</div>
<div style="position:absolute;right:567.13px;top:351.65px;font-size:13.5px;line-height:1;color:#e26a66;white-space:pre;letter-spacing:-1.127px;">26,8</div>
<div style="position:absolute;right:320.08px;top:351.65px;font-size:13.5px;line-height:1;color:#484848;white-space:pre;letter-spacing:-1.079px;">101,78</div>
<div style="position:absolute;left:1298.0px;top:351.65px;font-size:13.5px;line-height:1;color:#484848;white-space:pre;letter-spacing:-0.702px;">ГОВЯДИНА 1 С<span class="e">...</span></div>
<div style="position:absolute;left:1412.0px;top:351.65px;font-size:13.5px;line-height:1;color:#484848;white-space:pre;letter-spacing:-0.014px;">Стандарт. и пос<span class="e">...</span></div>
<div style="position:absolute;left:394.0px;top:368.0px;width:77.0px;height:21.0px;background:#edf5fd"></div>
<div style="position:absolute;left:57.5px;top:388.0px;width:1479.1px;height:1.0px;background:#eeeeee"></div>
<svg style="position:absolute;left:107.5px;top:372.4px" width="12" height="12" viewBox="0 0 12 12"><circle cx="6" cy="6" r="4.7" fill="#fff" stroke="#bdbdbd" stroke-width="1"/><path d="M3.4 6H8.6M6 3.4V8.6" stroke="#9a9a9a" stroke-width="1"/></svg>
<div style="position:absolute;left:129.7px;top:372.42px;font-size:13.5px;line-height:1;color:#484848;white-space:pre;letter-spacing:-0.254px;">к-кт мясного сырья д<span class="e">...</span></div>
<div style="position:absolute;left:368.8px;top:372.42px;font-size:13.5px;line-height:1;color:#484848;white-space:pre;letter-spacing:0.356px;">кг</div>
<div style="position:absolute;right:1055.67px;top:372.42px;font-size:13.5px;line-height:1;color:#484848;white-space:pre;letter-spacing:-1.069px;">450,007</div>
<div style="position:absolute;right:985.00px;top:372.42px;font-size:13.5px;line-height:1;color:#e26a66;white-space:pre;letter-spacing:0.000px;">3</div>
<div style="position:absolute;right:785.07px;top:372.42px;font-size:13.5px;line-height:1;color:#484848;white-space:pre;letter-spacing:-1.069px;">225,000</div>
<div style="position:absolute;right:699.07px;top:372.42px;font-size:13.5px;line-height:1;color:#484848;white-space:pre;letter-spacing:-1.069px;">675,000</div>
<div style="position:absolute;right:567.07px;top:372.42px;font-size:13.5px;line-height:1;color:#e26a66;white-space:pre;letter-spacing:-1.069px;">224,993</div>
<div style="position:absolute;right:321.03px;top:372.42px;font-size:13.5px;line-height:1;color:#484848;white-space:pre;letter-spacing:-2.031px;">90</div>
<div style="position:absolute;left:1298.0px;top:372.42px;font-size:13.5px;line-height:1;color:#484848;white-space:pre;letter-spacing:-0.125px;">к-кт мясного сы<span class="e">...</span></div>
<div style="position:absolute;left:1412.0px;top:372.42px;font-size:13.5px;line-height:1;color:#484848;white-space:pre;letter-spacing:-0.011px;">наборка к-та</div>
<div style="position:absolute;left:57.5px;top:389.0px;width:664.5px;height:21.0px;background:#abfda5"></div>
<div style="position:absolute;left:722.0px;top:389.0px;width:105.8px;height:21.0px;background:#edf5fd"></div>
<div style="position:absolute;left:827.8px;top:389.0px;width:708.8px;height:21.0px;background:#abfda5"></div>
<div style="position:absolute;left:57.5px;top:409.0px;width:1479.1px;height:2.0px;background:rgba(255,255,255,0.22)"></div>
<svg style="position:absolute;left:64.4px;top:393.2px" width="12" height="12" viewBox="0 0 12 12"><circle cx="6" cy="6" r="4.7" fill="#e4fbe1" stroke="#7f9a80" stroke-width="1"/><path d="M3.4 6H8.6M6 3.4V8.6" stroke="#4f6a50" stroke-width="1"/></svg>
<svg style="position:absolute;left:85.0px;top:391.0px" width="17" height="16" viewBox="0 0 17 16"><rect x="0.2" y="4" width="2.8" height="8" rx="0.6" fill="#5a9fc2"/><path d="M4.2 4.2H9V0.8L16.4 8L9 15.2V11.8H4.2Z" fill="#7ebcd8" stroke="#66a9cb" stroke-width="0.7" stroke-linejoin="round"/></svg>
<div style="position:absolute;left:109.7px;top:393.19px;font-size:13.5px;line-height:1;color:#2d5a36;white-space:pre;letter-spacing:-0.446px;">(БП)КОЛБАСА ВАРЕНА<span class="e">...</span></div>
<div style="position:absolute;left:275.6px;top:393.19px;font-size:13.5px;line-height:1;color:#2d5a36;white-space:pre;letter-spacing:-0.079px;">Формовка</div>
<div style="position:absolute;left:368.8px;top:393.19px;font-size:13.5px;line-height:1;color:#2d5a36;white-space:pre;letter-spacing:0.356px;">кг</div>
<div style="position:absolute;right:1055.68px;top:393.19px;font-size:13.5px;line-height:1;color:#2d5a36;white-space:pre;letter-spacing:-1.083px;">3 207,580</div>
<div style="position:absolute;right:987.03px;top:393.19px;font-size:13.5px;line-height:1;color:#2d5a36;white-space:pre;letter-spacing:-2.031px;">23</div>
<div style="position:absolute;right:891.33px;top:393.19px;font-size:13.5px;line-height:1;color:#2d5a36;white-space:pre;letter-spacing:-2.031px;">23</div>
<div style="position:absolute;right:785.07px;top:393.19px;font-size:13.5px;line-height:1;color:#454545;white-space:pre;letter-spacing:-1.069px;">139,460</div>
<div style="position:absolute;right:699.08px;top:393.19px;font-size:13.5px;line-height:1;color:#2d5a36;white-space:pre;letter-spacing:-1.083px;">3 207,580</div>
<div style="position:absolute;right:320.08px;top:393.19px;font-size:13.5px;line-height:1;color:#2d5a36;white-space:pre;letter-spacing:-1.079px;">139,46</div>
<div style="position:absolute;left:1298.0px;top:393.19px;font-size:13.5px;line-height:1;color:#2d5a36;white-space:pre;letter-spacing:-0.489px;">(БП)КОЛБАСА В<span class="e">...</span></div>
<div style="position:absolute;left:1412.0px;top:393.19px;font-size:13.5px;line-height:1;color:#2d5a36;white-space:pre;letter-spacing:-0.171px;">формовка</div>
<div style="position:absolute;left:57.5px;top:410.0px;width:664.5px;height:21.0px;background:#abfda5"></div>
<div style="position:absolute;left:722.0px;top:410.0px;width:105.8px;height:21.0px;background:#edf5fd"></div>
<div style="position:absolute;left:827.8px;top:410.0px;width:708.8px;height:21.0px;background:#abfda5"></div>
<div style="position:absolute;left:57.5px;top:430.0px;width:1479.1px;height:2.0px;background:rgba(255,255,255,0.22)"></div>
<svg style="position:absolute;left:64.4px;top:414.0px" width="12" height="12" viewBox="0 0 12 12"><circle cx="6" cy="6" r="4.7" fill="#e4fbe1" stroke="#7f9a80" stroke-width="1"/><path d="M3.4 6H8.6" stroke="#4f6a50" stroke-width="1"/></svg>
<svg style="position:absolute;left:85.0px;top:411.8px" width="17" height="16" viewBox="0 0 17 16"><rect x="0.2" y="4" width="2.8" height="8" rx="0.6" fill="#5a9fc2"/><path d="M4.2 4.2H9V0.8L16.4 8L9 15.2V11.8H4.2Z" fill="#7ebcd8" stroke="#66a9cb" stroke-width="0.7" stroke-linejoin="round"/></svg>
<div style="position:absolute;left:109.7px;top:413.96px;font-size:13.5px;line-height:1;color:#2d5a36;white-space:pre;letter-spacing:-0.446px;">(БП)КОЛБАСА ВАРЕНА<span class="e">...</span></div>
<div style="position:absolute;left:275.6px;top:413.96px;font-size:13.5px;line-height:1;color:#2d5a36;white-space:pre;letter-spacing:-0.079px;">Формовка</div>
<div style="position:absolute;left:368.8px;top:413.96px;font-size:13.5px;line-height:1;color:#2d5a36;white-space:pre;letter-spacing:0.356px;">кг</div>
<div style="position:absolute;right:1055.67px;top:413.96px;font-size:13.5px;line-height:1;color:#2d5a36;white-space:pre;letter-spacing:-1.069px;">154,539</div>
<div style="position:absolute;right:985.00px;top:413.96px;font-size:13.5px;line-height:1;color:#c0894a;white-space:pre;letter-spacing:0.000px;">2</div>
<div style="position:absolute;right:889.30px;top:413.96px;font-size:13.5px;line-height:1;color:#2d5a36;white-space:pre;letter-spacing:0.000px;">2</div>
<div style="position:absolute;right:785.08px;top:413.96px;font-size:13.5px;line-height:1;color:#454545;white-space:pre;letter-spacing:-1.079px;">77,270</div>
<div style="position:absolute;right:699.07px;top:413.96px;font-size:13.5px;line-height:1;color:#2d5a36;white-space:pre;letter-spacing:-1.069px;">154,540</div>
<div style="position:absolute;right:567.10px;top:413.96px;font-size:13.5px;line-height:1;color:#c0894a;white-space:pre;letter-spacing:-1.099px;">0,001</div>
<div style="position:absolute;right:320.08px;top:413.96px;font-size:13.5px;line-height:1;color:#2d5a36;white-space:pre;letter-spacing:-1.079px;">139,46</div>
<div style="position:absolute;left:1298.0px;top:413.96px;font-size:13.5px;line-height:1;color:#2d5a36;white-space:pre;letter-spacing:-0.489px;">(БП)КОЛБАСА В<span class="e">...</span></div>
<div style="position:absolute;left:1412.0px;top:413.96px;font-size:13.5px;line-height:1;color:#2d5a36;white-space:pre;letter-spacing:-0.171px;">формовка</div>
<div style="position:absolute;left:394.0px;top:431.0px;width:77.0px;height:20.0px;background:#edf5fd"></div>
<div style="position:absolute;left:57.5px;top:450.0px;width:1479.1px;height:1.0px;background:#eeeeee"></div>
<svg style="position:absolute;left:85.7px;top:434.8px" width="12" height="12" viewBox="0 0 12 12"><circle cx="6" cy="6" r="4.7" fill="#fff" stroke="#bdbdbd" stroke-width="1"/><path d="M3.4 6H8.6" stroke="#9a9a9a" stroke-width="1"/></svg>
<div style="position:absolute;left:107.8px;top:434.73px;font-size:13.5px;line-height:1;color:#484848;white-space:pre;letter-spacing:-0.363px;">(БП)КОЛБАСА ВАРЕНАЯ<span class="e">...</span></div>
<div style="position:absolute;left:275.6px;top:434.73px;font-size:13.5px;line-height:1;color:#484848;white-space:pre;letter-spacing:0.372px;">варка-копч<span class="e">...</span></div>
<div style="position:absolute;left:368.8px;top:434.73px;font-size:13.5px;line-height:1;color:#484848;white-space:pre;letter-spacing:0.356px;">кг</div>
<div style="position:absolute;right:1055.67px;top:434.73px;font-size:13.5px;line-height:1;color:#484848;white-space:pre;letter-spacing:-1.069px;">146,168</div>
<div style="position:absolute;right:985.00px;top:434.73px;font-size:13.5px;line-height:1;color:#484848;white-space:pre;letter-spacing:0.000px;">2</div>
<div style="position:absolute;right:889.30px;top:434.73px;font-size:13.5px;line-height:1;color:#484848;white-space:pre;letter-spacing:0.000px;">2</div>
<div style="position:absolute;right:785.08px;top:434.73px;font-size:13.5px;line-height:1;color:#484848;white-space:pre;letter-spacing:-1.079px;">73,084</div>
<div style="position:absolute;right:699.07px;top:434.73px;font-size:13.5px;line-height:1;color:#484848;white-space:pre;letter-spacing:-1.069px;">146,168</div>
<div style="position:absolute;right:320.07px;top:434.73px;font-size:13.5px;line-height:1;color:#484848;white-space:pre;letter-spacing:-1.069px;">131,906</div>
<div style="position:absolute;left:1298.0px;top:434.73px;font-size:13.5px;line-height:1;color:#484848;white-space:pre;letter-spacing:-0.489px;">(БП)КОЛБАСА В<span class="e">...</span></div>
<div style="position:absolute;left:1412.0px;top:434.73px;font-size:13.5px;line-height:1;color:#484848;white-space:pre;letter-spacing:0.041px;">варка-копчение</div>
<div style="position:absolute;left:57.5px;top:451.0px;width:1479.1px;height:21.0px;background:#eef5fc"></div>
<div style="position:absolute;left:395.0px;top:452.5px;width:162.3px;height:18.0px;background:#e0e3e8"></div>
<div style="position:absolute;left:470.5px;top:452.0px;width:1.5px;height:19.0px;background:#eef5fc"></div>
<div style="position:absolute;left:148.0px;top:452.0px;width:121.4px;height:18.0px;background:#c9dcf4"></div>
<div style="position:absolute;left:57.5px;top:471.0px;width:1479.1px;height:1.0px;background:#dfe6ee"></div>
<svg style="position:absolute;left:128.6px;top:453.9px" width="17" height="16" viewBox="0 0 17 16"><path d="M0.6 8L8 0.8V4.2H12.4V11.8H8V15.2Z" fill="#fbb768" stroke="#f5a148" stroke-width="0.7" stroke-linejoin="round"/><rect x="13.6" y="4.2" width="2.8" height="7.6" rx="0.5" fill="#f7a650"/></svg>
<div style="position:absolute;left:153.3px;top:455.50px;font-size:13.5px;line-height:1;color:#484848;white-space:pre;letter-spacing:-0.470px;">(БП)КОЛБАСА ВА<span class="e">...</span></div>
<div style="position:absolute;left:275.6px;top:455.50px;font-size:13.5px;line-height:1;color:#484848;white-space:pre;letter-spacing:0.123px;">передано н<span class="e">...</span></div>
<div style="position:absolute;left:368.8px;top:455.50px;font-size:13.5px;line-height:1;color:#484848;white-space:pre;letter-spacing:0.356px;">кг</div>
<div style="position:absolute;right:1055.67px;top:455.50px;font-size:13.5px;line-height:1;color:#484848;white-space:pre;letter-spacing:-1.069px;">137,893</div>
<div style="position:absolute;right:985.00px;top:455.50px;font-size:13.5px;line-height:1;color:#df6460;white-space:pre;letter-spacing:0.000px;">2</div>
<div style="position:absolute;right:889.30px;top:455.50px;font-size:13.5px;line-height:1;color:#484848;white-space:pre;letter-spacing:0.000px;">2</div>
<div style="position:absolute;right:785.08px;top:455.50px;font-size:13.5px;line-height:1;color:#484848;white-space:pre;letter-spacing:-1.079px;">68,947</div>
<div style="position:absolute;right:699.07px;top:455.50px;font-size:13.5px;line-height:1;color:#484848;white-space:pre;letter-spacing:-1.069px;">137,894</div>
<div style="position:absolute;right:567.10px;top:455.50px;font-size:13.5px;line-height:1;color:#df6460;white-space:pre;letter-spacing:-1.099px;">0,001</div>
<div style="position:absolute;right:320.08px;top:455.50px;font-size:13.5px;line-height:1;color:#484848;white-space:pre;letter-spacing:-1.079px;">124,44</div>
<div style="position:absolute;left:1298.0px;top:455.50px;font-size:13.5px;line-height:1;color:#484848;white-space:pre;letter-spacing:-0.489px;">(БП)КОЛБАСА В<span class="e">...</span></div>
<div style="position:absolute;left:1412.0px;top:455.50px;font-size:13.5px;line-height:1;color:#484848;white-space:pre;letter-spacing:-0.175px;">передано на ох<span class="e">...</span></div>
<div style="position:absolute;left:57.5px;top:472.0px;width:664.5px;height:21.0px;background:#abfda5"></div>
<div style="position:absolute;left:722.0px;top:472.0px;width:105.8px;height:21.0px;background:#edf5fd"></div>
<div style="position:absolute;left:827.8px;top:472.0px;width:708.8px;height:21.0px;background:#abfda5"></div>
<div style="position:absolute;left:57.5px;top:492.0px;width:1479.1px;height:2.0px;background:rgba(255,255,255,0.22)"></div>
<svg style="position:absolute;left:64.4px;top:476.3px" width="12" height="12" viewBox="0 0 12 12"><circle cx="6" cy="6" r="4.7" fill="#e4fbe1" stroke="#7f9a80" stroke-width="1"/><path d="M3.4 6H8.6M6 3.4V8.6" stroke="#4f6a50" stroke-width="1"/></svg>
<svg style="position:absolute;left:85.0px;top:474.1px" width="17" height="16" viewBox="0 0 17 16"><rect x="0.2" y="4" width="2.8" height="8" rx="0.6" fill="#5a9fc2"/><path d="M4.2 4.2H9V0.8L16.4 8L9 15.2V11.8H4.2Z" fill="#7ebcd8" stroke="#66a9cb" stroke-width="0.7" stroke-linejoin="round"/></svg>
<div style="position:absolute;left:109.7px;top:476.27px;font-size:13.5px;line-height:1;color:#2d5a36;white-space:pre;letter-spacing:-0.446px;">(БП)КОЛБАСА ВАРЕНА<span class="e">...</span></div>
<div style="position:absolute;left:275.6px;top:476.27px;font-size:13.5px;line-height:1;color:#2d5a36;white-space:pre;letter-spacing:-0.079px;">Формовка</div>
<div style="position:absolute;left:368.8px;top:476.27px;font-size:13.5px;line-height:1;color:#2d5a36;white-space:pre;letter-spacing:0.356px;">кг</div>
<div style="position:absolute;right:1055.67px;top:476.27px;font-size:13.5px;line-height:1;color:#2d5a36;white-space:pre;letter-spacing:-1.069px;">710,873</div>
<div style="position:absolute;right:985.00px;top:476.27px;font-size:13.5px;line-height:1;color:#c0894a;white-space:pre;letter-spacing:0.000px;">6</div>
<div style="position:absolute;right:889.30px;top:476.27px;font-size:13.5px;line-height:1;color:#2d5a36;white-space:pre;letter-spacing:0.000px;">6</div>
<div style="position:absolute;right:785.07px;top:476.27px;font-size:13.5px;line-height:1;color:#454545;white-space:pre;letter-spacing:-1.069px;">132,973</div>
<div style="position:absolute;right:699.07px;top:476.27px;font-size:13.5px;line-height:1;color:#2d5a36;white-space:pre;letter-spacing:-1.069px;">797,838</div>
<div style="position:absolute;right:567.08px;top:476.27px;font-size:13.5px;line-height:1;color:#c0894a;white-space:pre;letter-spacing:-1.079px;">86,965</div>
<div style="position:absolute;right:320.10px;top:476.27px;font-size:13.5px;line-height:1;color:#2d5a36;white-space:pre;letter-spacing:-1.099px;">134,1</div>
<div style="position:absolute;left:1298.0px;top:476.27px;font-size:13.5px;line-height:1;color:#2d5a36;white-space:pre;letter-spacing:-0.489px;">(БП)КОЛБАСА В<span class="e">...</span></div>
<div style="position:absolute;left:1412.0px;top:476.27px;font-size:13.5px;line-height:1;color:#2d5a36;white-space:pre;letter-spacing:-0.150px;">Формовка</div>
<div style="position:absolute;left:57.5px;top:493.0px;width:664.5px;height:21.0px;background:#abfda5"></div>
<div style="position:absolute;left:722.0px;top:493.0px;width:105.8px;height:21.0px;background:#edf5fd"></div>
<div style="position:absolute;left:827.8px;top:493.0px;width:708.8px;height:21.0px;background:#abfda5"></div>
<div style="position:absolute;left:57.5px;top:513.0px;width:1479.1px;height:2.0px;background:rgba(255,255,255,0.22)"></div>
<svg style="position:absolute;left:64.4px;top:497.1px" width="12" height="12" viewBox="0 0 12 12"><circle cx="6" cy="6" r="4.7" fill="#e4fbe1" stroke="#7f9a80" stroke-width="1"/><path d="M3.4 6H8.6M6 3.4V8.6" stroke="#4f6a50" stroke-width="1"/></svg>
<svg style="position:absolute;left:85.0px;top:494.9px" width="17" height="16" viewBox="0 0 17 16"><rect x="0.2" y="4" width="2.8" height="8" rx="0.6" fill="#5a9fc2"/><path d="M4.2 4.2H9V0.8L16.4 8L9 15.2V11.8H4.2Z" fill="#7ebcd8" stroke="#66a9cb" stroke-width="0.7" stroke-linejoin="round"/></svg>
<div style="position:absolute;left:109.7px;top:497.04px;font-size:13.5px;line-height:1;color:#2d5a36;white-space:pre;letter-spacing:-0.446px;">(БП)КОЛБАСА ВАРЕНА<span class="e">...</span></div>
<div style="position:absolute;left:275.6px;top:497.04px;font-size:13.5px;line-height:1;color:#2d5a36;white-space:pre;letter-spacing:-0.079px;">Формовка</div>
<div style="position:absolute;left:368.8px;top:497.04px;font-size:13.5px;line-height:1;color:#2d5a36;white-space:pre;letter-spacing:0.356px;">кг</div>
<div style="position:absolute;right:1055.67px;top:497.04px;font-size:13.5px;line-height:1;color:#2d5a36;white-space:pre;letter-spacing:-1.069px;">564,537</div>
<div style="position:absolute;right:985.00px;top:497.04px;font-size:13.5px;line-height:1;color:#c0894a;white-space:pre;letter-spacing:0.000px;">5</div>
<div style="position:absolute;right:889.30px;top:497.04px;font-size:13.5px;line-height:1;color:#2d5a36;white-space:pre;letter-spacing:0.000px;">5</div>
<div style="position:absolute;right:785.07px;top:497.04px;font-size:13.5px;line-height:1;color:#454545;white-space:pre;letter-spacing:-1.069px;">132,000</div>
<div style="position:absolute;right:699.07px;top:497.04px;font-size:13.5px;line-height:1;color:#2d5a36;white-space:pre;letter-spacing:-1.069px;">660,000</div>
<div style="position:absolute;right:567.08px;top:497.04px;font-size:13.5px;line-height:1;color:#c0894a;white-space:pre;letter-spacing:-1.079px;">95,463</div>
<div style="position:absolute;right:320.10px;top:497.04px;font-size:13.5px;line-height:1;color:#2d5a36;white-space:pre;letter-spacing:-1.099px;">134,1</div>
<div style="position:absolute;left:1298.0px;top:497.04px;font-size:13.5px;line-height:1;color:#2d5a36;white-space:pre;letter-spacing:-0.489px;">(БП)КОЛБАСА В<span class="e">...</span></div>
<div style="position:absolute;left:1412.0px;top:497.04px;font-size:13.5px;line-height:1;color:#2d5a36;white-space:pre;letter-spacing:-0.150px;">Формовка</div>
<div style="position:absolute;left:57.5px;top:514.0px;width:664.5px;height:20.0px;background:#abfda5"></div>
<div style="position:absolute;left:722.0px;top:514.0px;width:105.8px;height:20.0px;background:#edf5fd"></div>
<div style="position:absolute;left:827.8px;top:514.0px;width:708.8px;height:20.0px;background:#abfda5"></div>
<div style="position:absolute;left:57.5px;top:533.0px;width:1479.1px;height:2.0px;background:rgba(255,255,255,0.22)"></div>
<svg style="position:absolute;left:64.4px;top:517.8px" width="12" height="12" viewBox="0 0 12 12"><circle cx="6" cy="6" r="4.7" fill="#e4fbe1" stroke="#7f9a80" stroke-width="1"/><path d="M3.4 6H8.6M6 3.4V8.6" stroke="#4f6a50" stroke-width="1"/></svg>
<svg style="position:absolute;left:85.0px;top:515.6px" width="17" height="16" viewBox="0 0 17 16"><rect x="0.2" y="4" width="2.8" height="8" rx="0.6" fill="#5a9fc2"/><path d="M4.2 4.2H9V0.8L16.4 8L9 15.2V11.8H4.2Z" fill="#7ebcd8" stroke="#66a9cb" stroke-width="0.7" stroke-linejoin="round"/></svg>
<div style="position:absolute;left:109.7px;top:517.81px;font-size:13.5px;line-height:1;color:#2d5a36;white-space:pre;letter-spacing:-0.446px;">(БП)КОЛБАСА ВАРЕНА<span class="e">...</span></div>
<div style="position:absolute;left:275.6px;top:517.81px;font-size:13.5px;line-height:1;color:#2d5a36;white-space:pre;letter-spacing:-0.079px;">Формовка</div>
<div style="position:absolute;left:368.8px;top:517.81px;font-size:13.5px;line-height:1;color:#2d5a36;white-space:pre;letter-spacing:0.356px;">кг</div>
<div style="position:absolute;right:1055.67px;top:517.81px;font-size:13.5px;line-height:1;color:#2d5a36;white-space:pre;letter-spacing:-1.069px;">395,729</div>
<div style="position:absolute;right:985.00px;top:517.81px;font-size:13.5px;line-height:1;color:#c0894a;white-space:pre;letter-spacing:0.000px;">4</div>
<div style="position:absolute;right:889.30px;top:517.81px;font-size:13.5px;line-height:1;color:#2d5a36;white-space:pre;letter-spacing:0.000px;">4</div>
<div style="position:absolute;right:785.07px;top:517.81px;font-size:13.5px;line-height:1;color:#454545;white-space:pre;letter-spacing:-1.069px;">128,310</div>
<div style="position:absolute;right:699.07px;top:517.81px;font-size:13.5px;line-height:1;color:#2d5a36;white-space:pre;letter-spacing:-1.069px;">513,240</div>
<div style="position:absolute;right:566.73px;top:517.81px;font-size:13.5px;line-height:1;color:#c0894a;white-space:pre;letter-spacing:-0.733px;">117,511</div>
<div style="position:absolute;right:320.08px;top:517.81px;font-size:13.5px;line-height:1;color:#2d5a36;white-space:pre;letter-spacing:-1.079px;">131,16</div>
<div style="position:absolute;left:1298.0px;top:517.81px;font-size:13.5px;line-height:1;color:#2d5a36;white-space:pre;letter-spacing:-0.489px;">(БП)КОЛБАСА В<span class="e">...</span></div>
<div style="position:absolute;left:1412.0px;top:517.81px;font-size:13.5px;line-height:1;color:#2d5a36;white-space:pre;letter-spacing:-0.150px;">Формовка</div>
<div style="position:absolute;left:57.5px;top:534.0px;width:664.5px;height:21.0px;background:#abfda5"></div>
<div style="position:absolute;left:722.0px;top:534.0px;width:105.8px;height:21.0px;background:#edf5fd"></div>
<div style="position:absolute;left:827.8px;top:534.0px;width:708.8px;height:21.0px;background:#abfda5"></div>
<div style="position:absolute;left:57.5px;top:554.0px;width:1479.1px;height:2.0px;background:rgba(255,255,255,0.22)"></div>
<svg style="position:absolute;left:64.4px;top:538.6px" width="12" height="12" viewBox="0 0 12 12"><circle cx="6" cy="6" r="4.7" fill="#e4fbe1" stroke="#7f9a80" stroke-width="1"/><path d="M3.4 6H8.6" stroke="#4f6a50" stroke-width="1"/></svg>
<svg style="position:absolute;left:85.0px;top:536.4px" width="17" height="16" viewBox="0 0 17 16"><rect x="0.2" y="4" width="2.8" height="8" rx="0.6" fill="#5a9fc2"/><path d="M4.2 4.2H9V0.8L16.4 8L9 15.2V11.8H4.2Z" fill="#7ebcd8" stroke="#66a9cb" stroke-width="0.7" stroke-linejoin="round"/></svg>
<div style="position:absolute;left:109.7px;top:538.58px;font-size:13.5px;line-height:1;color:#2d5a36;white-space:pre;letter-spacing:-0.446px;">(БП)КОЛБАСА ВАРЕНА<span class="e">...</span></div>
<div style="position:absolute;left:275.6px;top:538.58px;font-size:13.5px;line-height:1;color:#2d5a36;white-space:pre;letter-spacing:-0.079px;">Формовка</div>
<div style="position:absolute;left:368.8px;top:538.58px;font-size:13.5px;line-height:1;color:#2d5a36;white-space:pre;letter-spacing:0.356px;">кг</div>
<div style="position:absolute;right:1055.67px;top:538.58px;font-size:13.5px;line-height:1;color:#2d5a36;white-space:pre;letter-spacing:-1.069px;">720,467</div>
<div style="position:absolute;right:985.00px;top:538.58px;font-size:13.5px;line-height:1;color:#c0894a;white-space:pre;letter-spacing:0.000px;">6</div>
<div style="position:absolute;right:889.30px;top:538.58px;font-size:13.5px;line-height:1;color:#2d5a36;white-space:pre;letter-spacing:0.000px;">6</div>
<div style="position:absolute;right:785.07px;top:538.58px;font-size:13.5px;line-height:1;color:#454545;white-space:pre;letter-spacing:-1.069px;">141,520</div>
<div style="position:absolute;right:699.07px;top:538.58px;font-size:13.5px;line-height:1;color:#2d5a36;white-space:pre;letter-spacing:-1.069px;">849,120</div>
<div style="position:absolute;right:567.07px;top:538.58px;font-size:13.5px;line-height:1;color:#c0894a;white-space:pre;letter-spacing:-1.069px;">128,653</div>
<div style="position:absolute;right:320.08px;top:538.58px;font-size:13.5px;line-height:1;color:#2d5a36;white-space:pre;letter-spacing:-1.079px;">139,99</div>
<div style="position:absolute;left:1298.0px;top:538.58px;font-size:13.5px;line-height:1;color:#2d5a36;white-space:pre;letter-spacing:-0.489px;">(БП)КОЛБАСА В<span class="e">...</span></div>
<div style="position:absolute;left:1412.0px;top:538.58px;font-size:13.5px;line-height:1;color:#2d5a36;white-space:pre;letter-spacing:-0.150px;">Формовка</div>
<div style="position:absolute;left:394.0px;top:555.0px;width:77.0px;height:21.0px;background:#edf5fd"></div>
<div style="position:absolute;left:57.5px;top:575.0px;width:1479.1px;height:1.0px;background:#eeeeee"></div>
<svg style="position:absolute;left:85.7px;top:559.4px" width="12" height="12" viewBox="0 0 12 12"><circle cx="6" cy="6" r="4.7" fill="#fff" stroke="#bdbdbd" stroke-width="1"/><path d="M3.4 6H8.6" stroke="#9a9a9a" stroke-width="1"/></svg>
<div style="position:absolute;left:107.8px;top:559.35px;font-size:13.5px;line-height:1;color:#484848;white-space:pre;letter-spacing:-0.363px;">(БП)КОЛБАСА ВАРЕНАЯ<span class="e">...</span></div>
<div style="position:absolute;left:275.6px;top:559.35px;font-size:13.5px;line-height:1;color:#484848;white-space:pre;letter-spacing:0.030px;">Термообра<span class="e">...</span></div>
<div style="position:absolute;left:368.8px;top:559.35px;font-size:13.5px;line-height:1;color:#484848;white-space:pre;letter-spacing:0.356px;">кг</div>
<div style="position:absolute;right:1055.67px;top:559.35px;font-size:13.5px;line-height:1;color:#484848;white-space:pre;letter-spacing:-1.069px;">685,000</div>
<div style="position:absolute;right:985.00px;top:559.35px;font-size:13.5px;line-height:1;color:#e26a66;white-space:pre;letter-spacing:0.000px;">5</div>
<div style="position:absolute;right:889.30px;top:559.35px;font-size:13.5px;line-height:1;color:#484848;white-space:pre;letter-spacing:0.000px;">5</div>
<div style="position:absolute;right:785.07px;top:559.35px;font-size:13.5px;line-height:1;color:#484848;white-space:pre;letter-spacing:-1.069px;">141,520</div>
<div style="position:absolute;right:699.07px;top:559.35px;font-size:13.5px;line-height:1;color:#484848;white-space:pre;letter-spacing:-1.069px;">707,600</div>
<div style="position:absolute;right:567.13px;top:559.35px;font-size:13.5px;line-height:1;color:#e26a66;white-space:pre;letter-spacing:-1.127px;">22,6</div>
<div style="position:absolute;right:320.08px;top:559.35px;font-size:13.5px;line-height:1;color:#484848;white-space:pre;letter-spacing:-1.079px;">137,49</div>
<div style="position:absolute;left:1298.0px;top:559.35px;font-size:13.5px;line-height:1;color:#484848;white-space:pre;letter-spacing:-0.489px;">(БП)КОЛБАСА В<span class="e">...</span></div>
<div style="position:absolute;left:1412.0px;top:559.35px;font-size:13.5px;line-height:1;color:#484848;white-space:pre;letter-spacing:0.101px;">Термообработк<span class="e">...</span></div>
<div style="position:absolute;left:394.0px;top:576.0px;width:163.3px;height:21.0px;background:#edf5fd"></div>
<div style="position:absolute;left:57.5px;top:596.0px;width:1479.1px;height:1.0px;background:#ebebeb"></div>
<svg style="position:absolute;left:128.6px;top:578.6px" width="17" height="16" viewBox="0 0 17 16"><path d="M0.6 8L8 0.8V4.2H12.4V11.8H8V15.2Z" fill="#fbb768" stroke="#f5a148" stroke-width="0.7" stroke-linejoin="round"/><rect x="13.6" y="4.2" width="2.8" height="7.6" rx="0.5" fill="#f7a650"/></svg>
<div style="position:absolute;left:153.3px;top:580.12px;font-size:13.5px;line-height:1;color:#484848;white-space:pre;letter-spacing:-0.470px;">(БП)КОЛБАСА ВА<span class="e">...</span></div>
<div style="position:absolute;left:275.6px;top:580.12px;font-size:13.5px;line-height:1;color:#484848;white-space:pre;letter-spacing:0.123px;">передано н<span class="e">...</span></div>
<div style="position:absolute;left:368.8px;top:580.12px;font-size:13.5px;line-height:1;color:#484848;white-space:pre;letter-spacing:0.356px;">кг</div>
<div style="position:absolute;right:1055.67px;top:580.12px;font-size:13.5px;line-height:1;color:#484848;white-space:pre;letter-spacing:-1.069px;">660,000</div>
<div style="position:absolute;right:985.00px;top:580.12px;font-size:13.5px;line-height:1;color:#e26a66;white-space:pre;letter-spacing:0.000px;">5</div>
<div style="position:absolute;right:889.30px;top:580.12px;font-size:13.5px;line-height:1;color:#484848;white-space:pre;letter-spacing:0.000px;">5</div>
<div style="position:absolute;right:785.07px;top:580.12px;font-size:13.5px;line-height:1;color:#484848;white-space:pre;letter-spacing:-1.069px;">137,000</div>
<div style="position:absolute;right:699.07px;top:580.12px;font-size:13.5px;line-height:1;color:#484848;white-space:pre;letter-spacing:-1.069px;">685,000</div>
<div style="position:absolute;right:568.03px;top:580.12px;font-size:13.5px;line-height:1;color:#e26a66;white-space:pre;letter-spacing:-2.031px;">25</div>
<div style="position:absolute;right:320.08px;top:580.12px;font-size:13.5px;line-height:1;color:#484848;white-space:pre;letter-spacing:-1.079px;">137,49</div>
<div style="position:absolute;left:1298.0px;top:580.12px;font-size:13.5px;line-height:1;color:#484848;white-space:pre;letter-spacing:-0.489px;">(БП)КОЛБАСА В<span class="e">...</span></div>
<div style="position:absolute;left:1412.0px;top:580.12px;font-size:13.5px;line-height:1;color:#484848;white-space:pre;letter-spacing:-0.175px;">передано на ох<span class="e">...</span></div>
<div style="position:absolute;left:57.5px;top:597.0px;width:664.5px;height:20.0px;background:#abfda5"></div>
<div style="position:absolute;left:722.0px;top:597.0px;width:105.8px;height:20.0px;background:#edf5fd"></div>
<div style="position:absolute;left:827.8px;top:597.0px;width:708.8px;height:20.0px;background:#abfda5"></div>
<div style="position:absolute;left:57.5px;top:616.0px;width:1479.1px;height:2.0px;background:rgba(255,255,255,0.22)"></div>
<svg style="position:absolute;left:64.4px;top:600.9px" width="12" height="12" viewBox="0 0 12 12"><circle cx="6" cy="6" r="4.7" fill="#e4fbe1" stroke="#7f9a80" stroke-width="1"/><path d="M3.4 6H8.6M6 3.4V8.6" stroke="#4f6a50" stroke-width="1"/></svg>
<svg style="position:absolute;left:85.0px;top:598.7px" width="17" height="16" viewBox="0 0 17 16"><rect x="0.2" y="4" width="2.8" height="8" rx="0.6" fill="#5a9fc2"/><path d="M4.2 4.2H9V0.8L16.4 8L9 15.2V11.8H4.2Z" fill="#7ebcd8" stroke="#66a9cb" stroke-width="0.7" stroke-linejoin="round"/></svg>
<div style="position:absolute;left:109.7px;top:600.89px;font-size:13.5px;line-height:1;color:#2d5a36;white-space:pre;letter-spacing:-0.446px;">(БП)КОЛБАСА ВАРЕНА<span class="e">...</span></div>
<div style="position:absolute;left:275.6px;top:600.89px;font-size:13.5px;line-height:1;color:#2d5a36;white-space:pre;letter-spacing:-0.079px;">Формовка</div>
<div style="position:absolute;left:368.8px;top:600.89px;font-size:13.5px;line-height:1;color:#2d5a36;white-space:pre;letter-spacing:0.356px;">кг</div>
<div style="position:absolute;right:1055.67px;top:600.89px;font-size:13.5px;line-height:1;color:#2d5a36;white-space:pre;letter-spacing:-1.069px;">829,140</div>
<div style="position:absolute;right:985.00px;top:600.89px;font-size:13.5px;line-height:1;color:#2d5a36;white-space:pre;letter-spacing:0.000px;">6</div>
<div style="position:absolute;right:889.30px;top:600.89px;font-size:13.5px;line-height:1;color:#2d5a36;white-space:pre;letter-spacing:0.000px;">6</div>
<div style="position:absolute;right:785.07px;top:600.89px;font-size:13.5px;line-height:1;color:#454545;white-space:pre;letter-spacing:-1.069px;">138,190</div>
<div style="position:absolute;right:699.07px;top:600.89px;font-size:13.5px;line-height:1;color:#2d5a36;white-space:pre;letter-spacing:-1.069px;">829,140</div>
<div style="position:absolute;right:320.08px;top:600.89px;font-size:13.5px;line-height:1;color:#2d5a36;white-space:pre;letter-spacing:-1.079px;">138,19</div>
<div style="position:absolute;left:1298.0px;top:600.89px;font-size:13.5px;line-height:1;color:#2d5a36;white-space:pre;letter-spacing:-0.489px;">(БП)КОЛБАСА В<span class="e">...</span></div>
<div style="position:absolute;left:1412.0px;top:600.89px;font-size:13.5px;line-height:1;color:#2d5a36;white-space:pre;letter-spacing:-0.150px;">Формовка</div>
<div style="position:absolute;left:57.5px;top:617.0px;width:664.5px;height:21.0px;background:#abfda5"></div>
<div style="position:absolute;left:722.0px;top:617.0px;width:105.8px;height:21.0px;background:#edf5fd"></div>
<div style="position:absolute;left:827.8px;top:617.0px;width:708.8px;height:21.0px;background:#abfda5"></div>
<div style="position:absolute;left:57.5px;top:637.0px;width:1479.1px;height:2.0px;background:rgba(255,255,255,0.22)"></div>
<svg style="position:absolute;left:64.4px;top:621.7px" width="12" height="12" viewBox="0 0 12 12"><circle cx="6" cy="6" r="4.7" fill="#e4fbe1" stroke="#7f9a80" stroke-width="1"/><path d="M3.4 6H8.6M6 3.4V8.6" stroke="#4f6a50" stroke-width="1"/></svg>
<svg style="position:absolute;left:85.0px;top:619.5px" width="17" height="16" viewBox="0 0 17 16"><rect x="0.2" y="4" width="2.8" height="8" rx="0.6" fill="#5a9fc2"/><path d="M4.2 4.2H9V0.8L16.4 8L9 15.2V11.8H4.2Z" fill="#7ebcd8" stroke="#66a9cb" stroke-width="0.7" stroke-linejoin="round"/></svg>
<div style="position:absolute;left:109.7px;top:621.66px;font-size:13.5px;line-height:1;color:#2d5a36;white-space:pre;letter-spacing:-0.446px;">(БП)КОЛБАСА ВАРЕНА<span class="e">...</span></div>
<div style="position:absolute;left:275.6px;top:621.66px;font-size:13.5px;line-height:1;color:#2d5a36;white-space:pre;letter-spacing:-0.079px;">Формовка</div>
<div style="position:absolute;left:368.8px;top:621.66px;font-size:13.5px;line-height:1;color:#2d5a36;white-space:pre;letter-spacing:0.356px;">кг</div>
<div style="position:absolute;right:1055.67px;top:621.66px;font-size:13.5px;line-height:1;color:#2d5a36;white-space:pre;letter-spacing:-1.069px;">724,817</div>
<div style="position:absolute;right:985.00px;top:621.66px;font-size:13.5px;line-height:1;color:#c0894a;white-space:pre;letter-spacing:0.000px;">6</div>
<div style="position:absolute;right:889.30px;top:621.66px;font-size:13.5px;line-height:1;color:#2d5a36;white-space:pre;letter-spacing:0.000px;">6</div>
<div style="position:absolute;right:785.07px;top:621.66px;font-size:13.5px;line-height:1;color:#454545;white-space:pre;letter-spacing:-1.069px;">136,100</div>
<div style="position:absolute;right:699.07px;top:621.66px;font-size:13.5px;line-height:1;color:#2d5a36;white-space:pre;letter-spacing:-1.069px;">816,600</div>
<div style="position:absolute;right:567.08px;top:621.66px;font-size:13.5px;line-height:1;color:#c0894a;white-space:pre;letter-spacing:-1.079px;">91,783</div>
<div style="position:absolute;right:320.10px;top:621.66px;font-size:13.5px;line-height:1;color:#2d5a36;white-space:pre;letter-spacing:-1.099px;">138,9</div>
<div style="position:absolute;left:1298.0px;top:621.66px;font-size:13.5px;line-height:1;color:#2d5a36;white-space:pre;letter-spacing:-0.489px;">(БП)КОЛБАСА В<span class="e">...</span></div>
<div style="position:absolute;left:1412.0px;top:621.66px;font-size:13.5px;line-height:1;color:#2d5a36;white-space:pre;letter-spacing:-0.150px;">Формовка</div>
<div style="position:absolute;left:57.5px;top:638.0px;width:664.5px;height:21.0px;background:#abfda5"></div>
<div style="position:absolute;left:722.0px;top:638.0px;width:105.8px;height:21.0px;background:#edf5fd"></div>
<div style="position:absolute;left:827.8px;top:638.0px;width:708.8px;height:21.0px;background:#abfda5"></div>
<div style="position:absolute;left:57.5px;top:658.0px;width:1479.1px;height:2.0px;background:rgba(255,255,255,0.22)"></div>
<svg style="position:absolute;left:64.4px;top:642.5px" width="12" height="12" viewBox="0 0 12 12"><circle cx="6" cy="6" r="4.7" fill="#e4fbe1" stroke="#7f9a80" stroke-width="1"/><path d="M3.4 6H8.6M6 3.4V8.6" stroke="#4f6a50" stroke-width="1"/></svg>
<svg style="position:absolute;left:85.0px;top:640.3px" width="17" height="16" viewBox="0 0 17 16"><rect x="0.2" y="4" width="2.8" height="8" rx="0.6" fill="#5a9fc2"/><path d="M4.2 4.2H9V0.8L16.4 8L9 15.2V11.8H4.2Z" fill="#7ebcd8" stroke="#66a9cb" stroke-width="0.7" stroke-linejoin="round"/></svg>
<div style="position:absolute;left:109.7px;top:642.43px;font-size:13.5px;line-height:1;color:#2d5a36;white-space:pre;letter-spacing:-0.446px;">(БП)КОЛБАСА ВАРЕНА<span class="e">...</span></div>
<div style="position:absolute;left:275.6px;top:642.43px;font-size:13.5px;line-height:1;color:#2d5a36;white-space:pre;letter-spacing:-0.079px;">Формовка</div>
<div style="position:absolute;left:368.8px;top:642.43px;font-size:13.5px;line-height:1;color:#2d5a36;white-space:pre;letter-spacing:0.356px;">кг</div>
<div style="position:absolute;right:1055.67px;top:642.43px;font-size:13.5px;line-height:1;color:#2d5a36;white-space:pre;letter-spacing:-1.069px;">533,917</div>
<div style="position:absolute;right:985.00px;top:642.43px;font-size:13.5px;line-height:1;color:#c0894a;white-space:pre;letter-spacing:0.000px;">5</div>
<div style="position:absolute;right:889.30px;top:642.43px;font-size:13.5px;line-height:1;color:#2d5a36;white-space:pre;letter-spacing:0.000px;">5</div>
<div style="position:absolute;right:785.07px;top:642.43px;font-size:13.5px;line-height:1;color:#454545;white-space:pre;letter-spacing:-1.069px;">131,930</div>
<div style="position:absolute;right:699.07px;top:642.43px;font-size:13.5px;line-height:1;color:#2d5a36;white-space:pre;letter-spacing:-1.069px;">659,650</div>
<div style="position:absolute;right:567.07px;top:642.43px;font-size:13.5px;line-height:1;color:#c0894a;white-space:pre;letter-spacing:-1.069px;">125,733</div>
<div style="position:absolute;right:320.08px;top:642.43px;font-size:13.5px;line-height:1;color:#2d5a36;white-space:pre;letter-spacing:-1.079px;">129,41</div>
<div style="position:absolute;left:1298.0px;top:642.43px;font-size:13.5px;line-height:1;color:#2d5a36;white-space:pre;letter-spacing:-0.489px;">(БП)КОЛБАСА В<span class="e">...</span></div>
<div style="position:absolute;left:1412.0px;top:642.43px;font-size:13.5px;line-height:1;color:#2d5a36;white-space:pre;letter-spacing:-0.150px;">Формовка</div>
<div style="position:absolute;left:57.5px;top:659.0px;width:664.5px;height:21.0px;background:#abfda5"></div>
<div style="position:absolute;left:722.0px;top:659.0px;width:105.8px;height:21.0px;background:#edf5fd"></div>
<div style="position:absolute;left:827.8px;top:659.0px;width:708.8px;height:21.0px;background:#abfda5"></div>
<div style="position:absolute;left:57.5px;top:679.0px;width:1479.1px;height:2.0px;background:rgba(255,255,255,0.22)"></div>
<svg style="position:absolute;left:64.4px;top:663.2px" width="12" height="12" viewBox="0 0 12 12"><circle cx="6" cy="6" r="4.7" fill="#e4fbe1" stroke="#7f9a80" stroke-width="1"/><path d="M3.4 6H8.6M6 3.4V8.6" stroke="#4f6a50" stroke-width="1"/></svg>
<svg style="position:absolute;left:85.0px;top:661.0px" width="17" height="16" viewBox="0 0 17 16"><rect x="0.2" y="4" width="2.8" height="8" rx="0.6" fill="#5a9fc2"/><path d="M4.2 4.2H9V0.8L16.4 8L9 15.2V11.8H4.2Z" fill="#7ebcd8" stroke="#66a9cb" stroke-width="0.7" stroke-linejoin="round"/></svg>
<div style="position:absolute;left:109.7px;top:663.20px;font-size:13.5px;line-height:1;color:#2d5a36;white-space:pre;letter-spacing:-0.516px;">(БП)КОЛБАСА ВАРЕНО-<span class="e">...</span></div>
<div style="position:absolute;left:275.6px;top:663.20px;font-size:13.5px;line-height:1;color:#2d5a36;white-space:pre;letter-spacing:-0.079px;">Формовка</div>
<div style="position:absolute;left:368.8px;top:663.20px;font-size:13.5px;line-height:1;color:#2d5a36;white-space:pre;letter-spacing:0.356px;">кг</div>
<div style="position:absolute;right:1055.68px;top:663.20px;font-size:13.5px;line-height:1;color:#2d5a36;white-space:pre;letter-spacing:-1.083px;">1 194,146</div>
<div style="position:absolute;right:987.03px;top:663.20px;font-size:13.5px;line-height:1;color:#c0894a;white-space:pre;letter-spacing:-2.031px;">12</div>
<div style="position:absolute;right:891.33px;top:663.20px;font-size:13.5px;line-height:1;color:#2d5a36;white-space:pre;letter-spacing:-2.031px;">12</div>
<div style="position:absolute;right:785.07px;top:663.20px;font-size:13.5px;line-height:1;color:#454545;white-space:pre;letter-spacing:-1.069px;">104,150</div>
<div style="position:absolute;right:699.08px;top:663.20px;font-size:13.5px;line-height:1;color:#2d5a36;white-space:pre;letter-spacing:-1.083px;">1 249,800</div>
<div style="position:absolute;right:567.08px;top:663.20px;font-size:13.5px;line-height:1;color:#c0894a;white-space:pre;letter-spacing:-1.079px;">55,654</div>
<div style="position:absolute;right:319.88px;top:663.20px;font-size:13.5px;line-height:1;color:#2d5a36;white-space:pre;letter-spacing:-0.879px;">112,53</div>
<div style="position:absolute;left:1298.0px;top:663.20px;font-size:13.5px;line-height:1;color:#2d5a36;white-space:pre;letter-spacing:-0.489px;">(БП)КОЛБАСА В<span class="e">...</span></div>
<div style="position:absolute;left:1412.0px;top:663.20px;font-size:13.5px;line-height:1;color:#2d5a36;white-space:pre;letter-spacing:-0.150px;">Формовка</div>
<div style="position:absolute;left:57.5px;top:680.0px;width:664.5px;height:21.0px;background:#abfda5"></div>
<div style="position:absolute;left:722.0px;top:680.0px;width:105.8px;height:21.0px;background:#edf5fd"></div>
<div style="position:absolute;left:827.8px;top:680.0px;width:708.8px;height:21.0px;background:#abfda5"></div>
<div style="position:absolute;left:57.5px;top:700.0px;width:1479.1px;height:2.0px;background:rgba(255,255,255,0.22)"></div>
<svg style="position:absolute;left:64.4px;top:684.0px" width="12" height="12" viewBox="0 0 12 12"><circle cx="6" cy="6" r="4.7" fill="#e4fbe1" stroke="#7f9a80" stroke-width="1"/><path d="M3.4 6H8.6M6 3.4V8.6" stroke="#4f6a50" stroke-width="1"/></svg>
<svg style="position:absolute;left:85.0px;top:681.8px" width="17" height="16" viewBox="0 0 17 16"><rect x="0.2" y="4" width="2.8" height="8" rx="0.6" fill="#5a9fc2"/><path d="M4.2 4.2H9V0.8L16.4 8L9 15.2V11.8H4.2Z" fill="#7ebcd8" stroke="#66a9cb" stroke-width="0.7" stroke-linejoin="round"/></svg>
<div style="position:absolute;left:109.7px;top:683.97px;font-size:13.5px;line-height:1;color:#2d5a36;white-space:pre;letter-spacing:-0.516px;">(БП)КОЛБАСА ВАРЕНО-<span class="e">...</span></div>
<div style="position:absolute;left:275.6px;top:683.97px;font-size:13.5px;line-height:1;color:#2d5a36;white-space:pre;letter-spacing:-0.079px;">Формовка</div>
<div style="position:absolute;left:368.8px;top:683.97px;font-size:13.5px;line-height:1;color:#2d5a36;white-space:pre;letter-spacing:0.356px;">кг</div>
<div style="position:absolute;right:1055.67px;top:683.97px;font-size:13.5px;line-height:1;color:#2d5a36;white-space:pre;letter-spacing:-1.069px;">534,997</div>
<div style="position:absolute;right:985.00px;top:683.97px;font-size:13.5px;line-height:1;color:#c0894a;white-space:pre;letter-spacing:0.000px;">6</div>
<div style="position:absolute;right:889.30px;top:683.97px;font-size:13.5px;line-height:1;color:#2d5a36;white-space:pre;letter-spacing:0.000px;">6</div>
<div style="position:absolute;right:785.07px;top:683.97px;font-size:13.5px;line-height:1;color:#454545;white-space:pre;letter-spacing:-1.069px;">104,480</div>
<div style="position:absolute;right:699.07px;top:683.97px;font-size:13.5px;line-height:1;color:#2d5a36;white-space:pre;letter-spacing:-1.069px;">626,880</div>
<div style="position:absolute;right:567.08px;top:683.97px;font-size:13.5px;line-height:1;color:#c0894a;white-space:pre;letter-spacing:-1.079px;">91,883</div>
<div style="position:absolute;right:320.08px;top:683.97px;font-size:13.5px;line-height:1;color:#2d5a36;white-space:pre;letter-spacing:-1.079px;">106,18</div>
<div style="position:absolute;left:1298.0px;top:683.97px;font-size:13.5px;line-height:1;color:#2d5a36;white-space:pre;letter-spacing:-0.489px;">(БП)КОЛБАСА В<span class="e">...</span></div>
<div style="position:absolute;left:1412.0px;top:683.97px;font-size:13.5px;line-height:1;color:#2d5a36;white-space:pre;letter-spacing:-0.171px;">формовка</div>
<div style="position:absolute;left:57.5px;top:701.0px;width:664.5px;height:20.0px;background:#abfda5"></div>
<div style="position:absolute;left:722.0px;top:701.0px;width:105.8px;height:20.0px;background:#edf5fd"></div>
<div style="position:absolute;left:827.8px;top:701.0px;width:708.8px;height:20.0px;background:#abfda5"></div>
<div style="position:absolute;left:57.5px;top:720.0px;width:1479.1px;height:2.0px;background:rgba(255,255,255,0.22)"></div>
<svg style="position:absolute;left:64.4px;top:704.8px" width="12" height="12" viewBox="0 0 12 12"><circle cx="6" cy="6" r="4.7" fill="#e4fbe1" stroke="#7f9a80" stroke-width="1"/><path d="M3.4 6H8.6M6 3.4V8.6" stroke="#4f6a50" stroke-width="1"/></svg>
<svg style="position:absolute;left:85.0px;top:702.6px" width="17" height="16" viewBox="0 0 17 16"><rect x="0.2" y="4" width="2.8" height="8" rx="0.6" fill="#5a9fc2"/><path d="M4.2 4.2H9V0.8L16.4 8L9 15.2V11.8H4.2Z" fill="#7ebcd8" stroke="#66a9cb" stroke-width="0.7" stroke-linejoin="round"/></svg>
<div style="position:absolute;left:109.7px;top:704.74px;font-size:13.5px;line-height:1;color:#2d5a36;white-space:pre;letter-spacing:-0.516px;">(БП)КОЛБАСА ВАРЕНО-<span class="e">...</span></div>
<div style="position:absolute;left:275.6px;top:704.74px;font-size:13.5px;line-height:1;color:#2d5a36;white-space:pre;letter-spacing:-0.079px;">Формовка</div>
<div style="position:absolute;left:368.8px;top:704.74px;font-size:13.5px;line-height:1;color:#2d5a36;white-space:pre;letter-spacing:0.356px;">кг</div>
<div style="position:absolute;right:1055.67px;top:704.74px;font-size:13.5px;line-height:1;color:#2d5a36;white-space:pre;letter-spacing:-1.069px;">325,637</div>
<div style="position:absolute;right:985.00px;top:704.74px;font-size:13.5px;line-height:1;color:#c0894a;white-space:pre;letter-spacing:0.000px;">4</div>
<div style="position:absolute;right:889.30px;top:704.74px;font-size:13.5px;line-height:1;color:#2d5a36;white-space:pre;letter-spacing:0.000px;">4</div>
<div style="position:absolute;right:785.07px;top:704.74px;font-size:13.5px;line-height:1;color:#454545;white-space:pre;letter-spacing:-1.069px;">105,020</div>
<div style="position:absolute;right:699.07px;top:704.74px;font-size:13.5px;line-height:1;color:#2d5a36;white-space:pre;letter-spacing:-1.069px;">420,080</div>
<div style="position:absolute;right:567.08px;top:704.74px;font-size:13.5px;line-height:1;color:#c0894a;white-space:pre;letter-spacing:-1.079px;">94,443</div>
<div style="position:absolute;right:320.10px;top:704.74px;font-size:13.5px;line-height:1;color:#2d5a36;white-space:pre;letter-spacing:-1.099px;">109,3</div>
<div style="position:absolute;left:1298.0px;top:704.74px;font-size:13.5px;line-height:1;color:#2d5a36;white-space:pre;letter-spacing:-0.489px;">(БП)КОЛБАСА В<span class="e">...</span></div>
<div style="position:absolute;left:1412.0px;top:704.74px;font-size:13.5px;line-height:1;color:#2d5a36;white-space:pre;letter-spacing:-0.821px;">ФОРМОВКА</div>
<div style="position:absolute;left:57.5px;top:721.0px;width:664.5px;height:21.0px;background:#abfda5"></div>
<div style="position:absolute;left:722.0px;top:721.0px;width:105.8px;height:21.0px;background:#edf5fd"></div>
<div style="position:absolute;left:827.8px;top:721.0px;width:708.8px;height:21.0px;background:#abfda5"></div>
<div style="position:absolute;left:57.5px;top:741.0px;width:1479.1px;height:2.0px;background:rgba(255,255,255,0.22)"></div>
<svg style="position:absolute;left:64.4px;top:725.5px" width="12" height="12" viewBox="0 0 12 12"><circle cx="6" cy="6" r="4.7" fill="#e4fbe1" stroke="#7f9a80" stroke-width="1"/><path d="M3.4 6H8.6M6 3.4V8.6" stroke="#4f6a50" stroke-width="1"/></svg>
<svg style="position:absolute;left:85.0px;top:723.3px" width="17" height="16" viewBox="0 0 17 16"><rect x="0.2" y="4" width="2.8" height="8" rx="0.6" fill="#5a9fc2"/><path d="M4.2 4.2H9V0.8L16.4 8L9 15.2V11.8H4.2Z" fill="#7ebcd8" stroke="#66a9cb" stroke-width="0.7" stroke-linejoin="round"/></svg>
<div style="position:absolute;left:109.7px;top:725.51px;font-size:13.5px;line-height:1;color:#2d5a36;white-space:pre;letter-spacing:-0.516px;">(БП)КОЛБАСА ВАРЕНО-<span class="e">...</span></div>
<div style="position:absolute;left:275.6px;top:725.51px;font-size:13.5px;line-height:1;color:#2d5a36;white-space:pre;letter-spacing:-0.079px;">Формовка</div>
<div style="position:absolute;left:368.8px;top:725.51px;font-size:13.5px;line-height:1;color:#2d5a36;white-space:pre;letter-spacing:0.356px;">кг</div>
<div style="position:absolute;right:1055.67px;top:725.51px;font-size:13.5px;line-height:1;color:#2d5a36;white-space:pre;letter-spacing:-1.069px;">583,881</div>
<div style="position:absolute;right:985.00px;top:725.51px;font-size:13.5px;line-height:1;color:#c0894a;white-space:pre;letter-spacing:0.000px;">6</div>
<div style="position:absolute;right:889.30px;top:725.51px;font-size:13.5px;line-height:1;color:#2d5a36;white-space:pre;letter-spacing:0.000px;">6</div>
<div style="position:absolute;right:784.90px;top:725.51px;font-size:13.5px;line-height:1;color:#454545;white-space:pre;letter-spacing:-0.902px;">110,230</div>
<div style="position:absolute;right:699.07px;top:725.51px;font-size:13.5px;line-height:1;color:#2d5a36;white-space:pre;letter-spacing:-1.069px;">661,380</div>
<div style="position:absolute;right:567.08px;top:725.51px;font-size:13.5px;line-height:1;color:#c0894a;white-space:pre;letter-spacing:-1.079px;">77,499</div>
<div style="position:absolute;right:319.88px;top:725.51px;font-size:13.5px;line-height:1;color:#2d5a36;white-space:pre;letter-spacing:-0.879px;">112,03</div>
<div style="position:absolute;left:1298.0px;top:725.51px;font-size:13.5px;line-height:1;color:#2d5a36;white-space:pre;letter-spacing:-0.489px;">(БП)КОЛБАСА В<span class="e">...</span></div>
<div style="position:absolute;left:1412.0px;top:725.51px;font-size:13.5px;line-height:1;color:#2d5a36;white-space:pre;letter-spacing:-0.150px;">Формовка</div>
<div style="position:absolute;left:57.5px;top:742.0px;width:664.5px;height:21.0px;background:#abfda5"></div>
<div style="position:absolute;left:722.0px;top:742.0px;width:105.8px;height:21.0px;background:#edf5fd"></div>
<div style="position:absolute;left:827.8px;top:742.0px;width:708.8px;height:21.0px;background:#abfda5"></div>
<div style="position:absolute;left:57.5px;top:762.0px;width:1479.1px;height:2.0px;background:rgba(255,255,255,0.22)"></div>
<svg style="position:absolute;left:64.4px;top:746.3px" width="12" height="12" viewBox="0 0 12 12"><circle cx="6" cy="6" r="4.7" fill="#e4fbe1" stroke="#7f9a80" stroke-width="1"/><path d="M3.4 6H8.6M6 3.4V8.6" stroke="#4f6a50" stroke-width="1"/></svg>
<svg style="position:absolute;left:85.0px;top:744.1px" width="17" height="16" viewBox="0 0 17 16"><rect x="0.2" y="4" width="2.8" height="8" rx="0.6" fill="#5a9fc2"/><path d="M4.2 4.2H9V0.8L16.4 8L9 15.2V11.8H4.2Z" fill="#7ebcd8" stroke="#66a9cb" stroke-width="0.7" stroke-linejoin="round"/></svg>
<div style="position:absolute;left:109.7px;top:746.28px;font-size:13.5px;line-height:1;color:#2d5a36;white-space:pre;letter-spacing:-0.428px;">(БП)КОЛБАСА ЛИВЕРН<span class="e">...</span></div>
<div style="position:absolute;left:275.6px;top:746.28px;font-size:13.5px;line-height:1;color:#2d5a36;white-space:pre;letter-spacing:-0.079px;">Формовка</div>
<div style="position:absolute;left:368.8px;top:746.28px;font-size:13.5px;line-height:1;color:#2d5a36;white-space:pre;letter-spacing:0.356px;">кг</div>
<div style="position:absolute;right:1055.67px;top:746.28px;font-size:13.5px;line-height:1;color:#2d5a36;white-space:pre;letter-spacing:-1.069px;">287,532</div>
<div style="position:absolute;right:985.00px;top:746.28px;font-size:13.5px;line-height:1;color:#c0894a;white-space:pre;letter-spacing:0.000px;">3</div>
<div style="position:absolute;right:889.30px;top:746.28px;font-size:13.5px;line-height:1;color:#2d5a36;white-space:pre;letter-spacing:0.000px;">3</div>
<div style="position:absolute;right:785.07px;top:746.28px;font-size:13.5px;line-height:1;color:#454545;white-space:pre;letter-spacing:-1.069px;">138,400</div>
<div style="position:absolute;right:699.07px;top:746.28px;font-size:13.5px;line-height:1;color:#2d5a36;white-space:pre;letter-spacing:-1.069px;">415,200</div>
<div style="position:absolute;right:567.07px;top:746.28px;font-size:13.5px;line-height:1;color:#c0894a;white-space:pre;letter-spacing:-1.069px;">127,668</div>
<div style="position:absolute;right:320.10px;top:746.28px;font-size:13.5px;line-height:1;color:#2d5a36;white-space:pre;letter-spacing:-1.099px;">140,4</div>
<div style="position:absolute;left:1298.0px;top:746.28px;font-size:13.5px;line-height:1;color:#2d5a36;white-space:pre;letter-spacing:-0.476px;">(БП)КОЛБАСА Л<span class="e">...</span></div>
<div style="position:absolute;left:1412.0px;top:746.28px;font-size:13.5px;line-height:1;color:#2d5a36;white-space:pre;letter-spacing:-0.150px;">Формовка</div>
<div style="position:absolute;left:57.5px;top:763.0px;width:664.5px;height:21.0px;background:#abfda5"></div>
<div style="position:absolute;left:722.0px;top:763.0px;width:105.8px;height:21.0px;background:#edf5fd"></div>
<div style="position:absolute;left:827.8px;top:763.0px;width:708.8px;height:21.0px;background:#abfda5"></div>
<div style="position:absolute;left:57.5px;top:783.0px;width:1479.1px;height:2.0px;background:rgba(255,255,255,0.22)"></div>
<svg style="position:absolute;left:64.4px;top:767.1px" width="12" height="12" viewBox="0 0 12 12"><circle cx="6" cy="6" r="4.7" fill="#e4fbe1" stroke="#7f9a80" stroke-width="1"/><path d="M3.4 6H8.6M6 3.4V8.6" stroke="#4f6a50" stroke-width="1"/></svg>
<svg style="position:absolute;left:85.0px;top:764.9px" width="17" height="16" viewBox="0 0 17 16"><rect x="0.2" y="4" width="2.8" height="8" rx="0.6" fill="#5a9fc2"/><path d="M4.2 4.2H9V0.8L16.4 8L9 15.2V11.8H4.2Z" fill="#7ebcd8" stroke="#66a9cb" stroke-width="0.7" stroke-linejoin="round"/></svg>
<div style="position:absolute;left:109.7px;top:767.05px;font-size:13.5px;line-height:1;color:#2d5a36;white-space:pre;letter-spacing:-0.548px;">(БП)КОЛБАСА ПОЛУКОП<span class="e">...</span></div>
<div style="position:absolute;left:275.6px;top:767.05px;font-size:13.5px;line-height:1;color:#2d5a36;white-space:pre;letter-spacing:-0.079px;">Формовка</div>
<div style="position:absolute;left:368.8px;top:767.05px;font-size:13.5px;line-height:1;color:#2d5a36;white-space:pre;letter-spacing:0.356px;">кг</div>
<div style="position:absolute;right:1055.67px;top:767.05px;font-size:13.5px;line-height:1;color:#2d5a36;white-space:pre;letter-spacing:-1.069px;">548,296</div>
<div style="position:absolute;right:985.00px;top:767.05px;font-size:13.5px;line-height:1;color:#c0894a;white-space:pre;letter-spacing:0.000px;">6</div>
<div style="position:absolute;right:889.30px;top:767.05px;font-size:13.5px;line-height:1;color:#2d5a36;white-space:pre;letter-spacing:0.000px;">6</div>
<div style="position:absolute;right:785.07px;top:767.05px;font-size:13.5px;line-height:1;color:#454545;white-space:pre;letter-spacing:-1.069px;">105,210</div>
<div style="position:absolute;right:699.07px;top:767.05px;font-size:13.5px;line-height:1;color:#2d5a36;white-space:pre;letter-spacing:-1.069px;">631,260</div>
<div style="position:absolute;right:567.08px;top:767.05px;font-size:13.5px;line-height:1;color:#c0894a;white-space:pre;letter-spacing:-1.079px;">82,964</div>
<div style="position:absolute;right:319.88px;top:767.05px;font-size:13.5px;line-height:1;color:#2d5a36;white-space:pre;letter-spacing:-0.879px;">112,39</div>
<div style="position:absolute;left:1298.0px;top:767.05px;font-size:13.5px;line-height:1;color:#2d5a36;white-space:pre;letter-spacing:-0.546px;">(БП)КОЛБАСА П<span class="e">...</span></div>
<div style="position:absolute;left:1412.0px;top:767.05px;font-size:13.5px;line-height:1;color:#2d5a36;white-space:pre;letter-spacing:-0.150px;">Формовка</div>
<div style="position:absolute;left:57.5px;top:784.0px;width:664.5px;height:20.0px;background:#abfda5"></div>
<div style="position:absolute;left:722.0px;top:784.0px;width:105.8px;height:20.0px;background:#edf5fd"></div>
<div style="position:absolute;left:827.8px;top:784.0px;width:708.8px;height:20.0px;background:#abfda5"></div>
<div style="position:absolute;left:57.5px;top:803.0px;width:1479.1px;height:2.0px;background:rgba(255,255,255,0.22)"></div>
<svg style="position:absolute;left:64.4px;top:787.9px" width="12" height="12" viewBox="0 0 12 12"><circle cx="6" cy="6" r="4.7" fill="#e4fbe1" stroke="#7f9a80" stroke-width="1"/><path d="M3.4 6H8.6M6 3.4V8.6" stroke="#4f6a50" stroke-width="1"/></svg>
<svg style="position:absolute;left:85.0px;top:785.6px" width="17" height="16" viewBox="0 0 17 16"><rect x="0.2" y="4" width="2.8" height="8" rx="0.6" fill="#5a9fc2"/><path d="M4.2 4.2H9V0.8L16.4 8L9 15.2V11.8H4.2Z" fill="#7ebcd8" stroke="#66a9cb" stroke-width="0.7" stroke-linejoin="round"/></svg>
<div style="position:absolute;left:109.7px;top:787.82px;font-size:13.5px;line-height:1;color:#2d5a36;white-space:pre;letter-spacing:-0.548px;">(БП)КОЛБАСА ПОЛУКОП<span class="e">...</span></div>
<div style="position:absolute;left:275.6px;top:787.82px;font-size:13.5px;line-height:1;color:#2d5a36;white-space:pre;letter-spacing:-0.079px;">Формовка</div>
<div style="position:absolute;left:368.8px;top:787.82px;font-size:13.5px;line-height:1;color:#2d5a36;white-space:pre;letter-spacing:0.356px;">кг</div>
<div style="position:absolute;right:1055.67px;top:787.82px;font-size:13.5px;line-height:1;color:#2d5a36;white-space:pre;letter-spacing:-1.069px;">326,760</div>
<div style="position:absolute;right:985.00px;top:787.82px;font-size:13.5px;line-height:1;color:#2d5a36;white-space:pre;letter-spacing:0.000px;">3</div>
<div style="position:absolute;right:889.30px;top:787.82px;font-size:13.5px;line-height:1;color:#2d5a36;white-space:pre;letter-spacing:0.000px;">3</div>
<div style="position:absolute;right:785.07px;top:787.82px;font-size:13.5px;line-height:1;color:#454545;white-space:pre;letter-spacing:-1.069px;">108,920</div>
<div style="position:absolute;right:699.07px;top:787.82px;font-size:13.5px;line-height:1;color:#2d5a36;white-space:pre;letter-spacing:-1.069px;">326,760</div>
<div style="position:absolute;right:319.88px;top:787.82px;font-size:13.5px;line-height:1;color:#2d5a36;white-space:pre;letter-spacing:-0.879px;">110,72</div>
<div style="position:absolute;left:1298.0px;top:787.82px;font-size:13.5px;line-height:1;color:#2d5a36;white-space:pre;letter-spacing:-0.546px;">(БП)КОЛБАСА П<span class="e">...</span></div>
<div style="position:absolute;left:1412.0px;top:787.82px;font-size:13.5px;line-height:1;color:#2d5a36;white-space:pre;letter-spacing:-0.150px;">Формовка</div>
<div style="position:absolute;left:57.5px;top:804.0px;width:664.5px;height:21.0px;background:#abfda5"></div>
<div style="position:absolute;left:722.0px;top:804.0px;width:105.8px;height:21.0px;background:#edf5fd"></div>
<div style="position:absolute;left:827.8px;top:804.0px;width:708.8px;height:21.0px;background:#abfda5"></div>
<div style="position:absolute;left:57.5px;top:824.0px;width:1479.1px;height:2.0px;background:rgba(255,255,255,0.22)"></div>
<svg style="position:absolute;left:64.4px;top:808.6px" width="12" height="12" viewBox="0 0 12 12"><circle cx="6" cy="6" r="4.7" fill="#e4fbe1" stroke="#7f9a80" stroke-width="1"/><path d="M3.4 6H8.6M6 3.4V8.6" stroke="#4f6a50" stroke-width="1"/></svg>
<svg style="position:absolute;left:85.0px;top:806.4px" width="17" height="16" viewBox="0 0 17 16"><rect x="0.2" y="4" width="2.8" height="8" rx="0.6" fill="#5a9fc2"/><path d="M4.2 4.2H9V0.8L16.4 8L9 15.2V11.8H4.2Z" fill="#7ebcd8" stroke="#66a9cb" stroke-width="0.7" stroke-linejoin="round"/></svg>
<div style="position:absolute;left:109.7px;top:808.59px;font-size:13.5px;line-height:1;color:#2d5a36;white-space:pre;letter-spacing:-0.548px;">(БП)КОЛБАСА ПОЛУКОП<span class="e">...</span></div>
<div style="position:absolute;left:275.6px;top:808.59px;font-size:13.5px;line-height:1;color:#2d5a36;white-space:pre;letter-spacing:-0.079px;">Формовка</div>
<div style="position:absolute;left:368.8px;top:808.59px;font-size:13.5px;line-height:1;color:#2d5a36;white-space:pre;letter-spacing:0.356px;">кг</div>
<div style="position:absolute;right:1055.68px;top:808.59px;font-size:13.5px;line-height:1;color:#2d5a36;white-space:pre;letter-spacing:-1.083px;">2 481,171</div>
<div style="position:absolute;right:987.03px;top:808.59px;font-size:13.5px;line-height:1;color:#c0894a;white-space:pre;letter-spacing:-2.031px;">23</div>
<div style="position:absolute;right:891.33px;top:808.59px;font-size:13.5px;line-height:1;color:#2d5a36;white-space:pre;letter-spacing:-2.031px;">23</div>
<div style="position:absolute;right:785.07px;top:808.59px;font-size:13.5px;line-height:1;color:#454545;white-space:pre;letter-spacing:-1.069px;">109,000</div>
<div style="position:absolute;right:699.08px;top:808.59px;font-size:13.5px;line-height:1;color:#2d5a36;white-space:pre;letter-spacing:-1.083px;">2 507,000</div>
<div style="position:absolute;right:567.08px;top:808.59px;font-size:13.5px;line-height:1;color:#c0894a;white-space:pre;letter-spacing:-1.079px;">25,829</div>
<div style="position:absolute;right:320.10px;top:808.59px;font-size:13.5px;line-height:1;color:#2d5a36;white-space:pre;letter-spacing:-1.099px;">106,8</div>
<div style="position:absolute;left:1298.0px;top:808.59px;font-size:13.5px;line-height:1;color:#2d5a36;white-space:pre;letter-spacing:-0.546px;">(БП)КОЛБАСА П<span class="e">...</span></div>
<div style="position:absolute;left:1412.0px;top:808.59px;font-size:13.5px;line-height:1;color:#2d5a36;white-space:pre;letter-spacing:-0.150px;">Формовка</div>
<div style="position:absolute;left:57.5px;top:825.0px;width:664.5px;height:21.0px;background:#abfda5"></div>
<div style="position:absolute;left:722.0px;top:825.0px;width:105.8px;height:21.0px;background:#edf5fd"></div>
<div style="position:absolute;left:827.8px;top:825.0px;width:708.8px;height:21.0px;background:#abfda5"></div>
<div style="position:absolute;left:57.5px;top:845.0px;width:1479.1px;height:2.0px;background:rgba(255,255,255,0.22)"></div>
<svg style="position:absolute;left:64.4px;top:829.4px" width="12" height="12" viewBox="0 0 12 12"><circle cx="6" cy="6" r="4.7" fill="#e4fbe1" stroke="#7f9a80" stroke-width="1"/><path d="M3.4 6H8.6M6 3.4V8.6" stroke="#4f6a50" stroke-width="1"/></svg>
<svg style="position:absolute;left:85.0px;top:827.2px" width="17" height="16" viewBox="0 0 17 16"><rect x="0.2" y="4" width="2.8" height="8" rx="0.6" fill="#5a9fc2"/><path d="M4.2 4.2H9V0.8L16.4 8L9 15.2V11.8H4.2Z" fill="#7ebcd8" stroke="#66a9cb" stroke-width="0.7" stroke-linejoin="round"/></svg>
<div style="position:absolute;left:109.7px;top:829.36px;font-size:13.5px;line-height:1;color:#2d5a36;white-space:pre;letter-spacing:-0.635px;">(БП)КОЛБАСА РОМАНО <span class="e">...</span></div>
<div style="position:absolute;left:275.6px;top:829.36px;font-size:13.5px;line-height:1;color:#2d5a36;white-space:pre;letter-spacing:-0.079px;">Формовка</div>
<div style="position:absolute;left:368.8px;top:829.36px;font-size:13.5px;line-height:1;color:#2d5a36;white-space:pre;letter-spacing:0.356px;">кг</div>
<div style="position:absolute;right:1055.67px;top:829.36px;font-size:13.5px;line-height:1;color:#2d5a36;white-space:pre;letter-spacing:-1.069px;">615,939</div>
<div style="position:absolute;right:985.00px;top:829.36px;font-size:13.5px;line-height:1;color:#c0894a;white-space:pre;letter-spacing:0.000px;">6</div>
<div style="position:absolute;right:889.30px;top:829.36px;font-size:13.5px;line-height:1;color:#2d5a36;white-space:pre;letter-spacing:0.000px;">6</div>
<div style="position:absolute;right:785.07px;top:829.36px;font-size:13.5px;line-height:1;color:#454545;white-space:pre;letter-spacing:-1.069px;">105,120</div>
<div style="position:absolute;right:699.07px;top:829.36px;font-size:13.5px;line-height:1;color:#2d5a36;white-space:pre;letter-spacing:-1.069px;">630,720</div>
<div style="position:absolute;right:567.08px;top:829.36px;font-size:13.5px;line-height:1;color:#c0894a;white-space:pre;letter-spacing:-1.079px;">14,781</div>
<div style="position:absolute;right:320.08px;top:829.36px;font-size:13.5px;line-height:1;color:#2d5a36;white-space:pre;letter-spacing:-1.079px;">107,59</div>
<div style="position:absolute;left:1298.0px;top:829.36px;font-size:13.5px;line-height:1;color:#2d5a36;white-space:pre;letter-spacing:-0.489px;">(БП)КОЛБАСА Р<span class="e">...</span></div>
<div style="position:absolute;left:1412.0px;top:829.36px;font-size:13.5px;line-height:1;color:#2d5a36;white-space:pre;letter-spacing:-0.150px;">Формовка</div>
<div style="position:absolute;left:57.5px;top:846.0px;width:664.5px;height:21.0px;background:#abfda5"></div>
<div style="position:absolute;left:722.0px;top:846.0px;width:105.8px;height:21.0px;background:#edf5fd"></div>
<div style="position:absolute;left:827.8px;top:846.0px;width:708.8px;height:21.0px;background:#abfda5"></div>
<div style="position:absolute;left:57.5px;top:866.0px;width:1479.1px;height:2.0px;background:rgba(255,255,255,0.22)"></div>
<svg style="position:absolute;left:64.4px;top:850.2px" width="12" height="12" viewBox="0 0 12 12"><circle cx="6" cy="6" r="4.7" fill="#e4fbe1" stroke="#7f9a80" stroke-width="1"/><path d="M3.4 6H8.6M6 3.4V8.6" stroke="#4f6a50" stroke-width="1"/></svg>
<svg style="position:absolute;left:85.0px;top:848.0px" width="17" height="16" viewBox="0 0 17 16"><rect x="0.2" y="4" width="2.8" height="8" rx="0.6" fill="#5a9fc2"/><path d="M4.2 4.2H9V0.8L16.4 8L9 15.2V11.8H4.2Z" fill="#7ebcd8" stroke="#66a9cb" stroke-width="0.7" stroke-linejoin="round"/></svg>
<div style="position:absolute;left:109.7px;top:850.13px;font-size:13.5px;line-height:1;color:#2d5a36;white-space:pre;letter-spacing:-0.675px;">(БП)КОЛБАСА СЫРОКО<span class="e">...</span></div>
<div style="position:absolute;left:275.6px;top:850.13px;font-size:13.5px;line-height:1;color:#2d5a36;white-space:pre;letter-spacing:-0.079px;">Формовка</div>
<div style="position:absolute;left:368.8px;top:850.13px;font-size:13.5px;line-height:1;color:#2d5a36;white-space:pre;letter-spacing:0.356px;">кг</div>
<div style="position:absolute;right:1055.67px;top:850.13px;font-size:13.5px;line-height:1;color:#2d5a36;white-space:pre;letter-spacing:-1.069px;">255,789</div>
<div style="position:absolute;right:985.00px;top:850.13px;font-size:13.5px;line-height:1;color:#c0894a;white-space:pre;letter-spacing:0.000px;">3</div>
<div style="position:absolute;right:889.30px;top:850.13px;font-size:13.5px;line-height:1;color:#2d5a36;white-space:pre;letter-spacing:0.000px;">3</div>
<div style="position:absolute;right:785.07px;top:850.13px;font-size:13.5px;line-height:1;color:#454545;white-space:pre;letter-spacing:-1.069px;">106,650</div>
<div style="position:absolute;right:699.07px;top:850.13px;font-size:13.5px;line-height:1;color:#2d5a36;white-space:pre;letter-spacing:-1.069px;">319,950</div>
<div style="position:absolute;right:567.08px;top:850.13px;font-size:13.5px;line-height:1;color:#c0894a;white-space:pre;letter-spacing:-1.079px;">64,161</div>
<div style="position:absolute;right:320.08px;top:850.13px;font-size:13.5px;line-height:1;color:#2d5a36;white-space:pre;letter-spacing:-1.079px;">107,81</div>
<div style="position:absolute;left:1298.0px;top:850.13px;font-size:13.5px;line-height:1;color:#2d5a36;white-space:pre;letter-spacing:-0.509px;">(БП)КОЛБАСА С<span class="e">...</span></div>
<div style="position:absolute;left:1412.0px;top:850.13px;font-size:13.5px;line-height:1;color:#2d5a36;white-space:pre;letter-spacing:-0.150px;">Формовка</div>
<div style="position:absolute;left:57.5px;top:867.0px;width:664.5px;height:21.0px;background:#abfda5"></div>
<div style="position:absolute;left:722.0px;top:867.0px;width:105.8px;height:21.0px;background:#edf5fd"></div>
<div style="position:absolute;left:827.8px;top:867.0px;width:708.8px;height:21.0px;background:#abfda5"></div>
<div style="position:absolute;left:57.5px;top:887.0px;width:1479.1px;height:2.0px;background:rgba(255,255,255,0.22)"></div>
<svg style="position:absolute;left:64.4px;top:870.9px" width="12" height="12" viewBox="0 0 12 12"><circle cx="6" cy="6" r="4.7" fill="#e4fbe1" stroke="#7f9a80" stroke-width="1"/><path d="M3.4 6H8.6M6 3.4V8.6" stroke="#4f6a50" stroke-width="1"/></svg>
<svg style="position:absolute;left:85.0px;top:868.7px" width="17" height="16" viewBox="0 0 17 16"><rect x="0.2" y="4" width="2.8" height="8" rx="0.6" fill="#5a9fc2"/><path d="M4.2 4.2H9V0.8L16.4 8L9 15.2V11.8H4.2Z" fill="#7ebcd8" stroke="#66a9cb" stroke-width="0.7" stroke-linejoin="round"/></svg>
<div style="position:absolute;left:109.7px;top:870.90px;font-size:13.5px;line-height:1;color:#2d5a36;white-space:pre;letter-spacing:-0.675px;">(БП)КОЛБАСА СЫРОКО<span class="e">...</span></div>
<div style="position:absolute;left:275.6px;top:870.90px;font-size:13.5px;line-height:1;color:#2d5a36;white-space:pre;letter-spacing:-0.079px;">Формовка</div>
<div style="position:absolute;left:368.8px;top:870.90px;font-size:13.5px;line-height:1;color:#2d5a36;white-space:pre;letter-spacing:0.356px;">кг</div>
<div style="position:absolute;right:1055.67px;top:870.90px;font-size:13.5px;line-height:1;color:#2d5a36;white-space:pre;letter-spacing:-1.069px;">629,719</div>
<div style="position:absolute;right:985.00px;top:870.90px;font-size:13.5px;line-height:1;color:#c0894a;white-space:pre;letter-spacing:0.000px;">6</div>
<div style="position:absolute;right:889.30px;top:870.90px;font-size:13.5px;line-height:1;color:#2d5a36;white-space:pre;letter-spacing:0.000px;">6</div>
<div style="position:absolute;right:785.07px;top:870.90px;font-size:13.5px;line-height:1;color:#454545;white-space:pre;letter-spacing:-1.069px;">105,370</div>
<div style="position:absolute;right:699.07px;top:870.90px;font-size:13.5px;line-height:1;color:#2d5a36;white-space:pre;letter-spacing:-1.069px;">632,220</div>
<div style="position:absolute;right:567.10px;top:870.90px;font-size:13.5px;line-height:1;color:#c0894a;white-space:pre;letter-spacing:-1.099px;">2,501</div>
<div style="position:absolute;right:320.08px;top:870.90px;font-size:13.5px;line-height:1;color:#2d5a36;white-space:pre;letter-spacing:-1.079px;">107,25</div>
<div style="position:absolute;left:1298.0px;top:870.90px;font-size:13.5px;line-height:1;color:#2d5a36;white-space:pre;letter-spacing:-0.509px;">(БП)КОЛБАСА С<span class="e">...</span></div>
<div style="position:absolute;left:1412.0px;top:870.90px;font-size:13.5px;line-height:1;color:#2d5a36;white-space:pre;letter-spacing:-0.150px;">Формовка</div>
<div style="position:absolute;left:57.5px;top:888.0px;width:664.5px;height:20.0px;background:#abfda5"></div>
<div style="position:absolute;left:722.0px;top:888.0px;width:105.8px;height:20.0px;background:#edf5fd"></div>
<div style="position:absolute;left:827.8px;top:888.0px;width:708.8px;height:20.0px;background:#abfda5"></div>
<div style="position:absolute;left:57.5px;top:907.0px;width:1479.1px;height:2.0px;background:rgba(255,255,255,0.22)"></div>
<svg style="position:absolute;left:64.4px;top:891.7px" width="12" height="12" viewBox="0 0 12 12"><circle cx="6" cy="6" r="4.7" fill="#e4fbe1" stroke="#7f9a80" stroke-width="1"/><path d="M3.4 6H8.6M6 3.4V8.6" stroke="#4f6a50" stroke-width="1"/></svg>
<svg style="position:absolute;left:85.0px;top:889.5px" width="17" height="16" viewBox="0 0 17 16"><rect x="0.2" y="4" width="2.8" height="8" rx="0.6" fill="#5a9fc2"/><path d="M4.2 4.2H9V0.8L16.4 8L9 15.2V11.8H4.2Z" fill="#7ebcd8" stroke="#66a9cb" stroke-width="0.7" stroke-linejoin="round"/></svg>
<div style="position:absolute;left:109.7px;top:891.67px;font-size:13.5px;line-height:1;color:#2d5a36;white-space:pre;letter-spacing:-0.675px;">(БП)КОЛБАСА СЫРОКО<span class="e">...</span></div>
<div style="position:absolute;left:275.6px;top:891.67px;font-size:13.5px;line-height:1;color:#2d5a36;white-space:pre;letter-spacing:-0.079px;">Формовка</div>
<div style="position:absolute;left:368.8px;top:891.67px;font-size:13.5px;line-height:1;color:#2d5a36;white-space:pre;letter-spacing:0.356px;">кг</div>
<div style="position:absolute;right:1055.50px;top:891.67px;font-size:13.5px;line-height:1;color:#2d5a36;white-space:pre;letter-spacing:-0.902px;">753,311</div>
<div style="position:absolute;right:985.00px;top:891.67px;font-size:13.5px;line-height:1;color:#c0894a;white-space:pre;letter-spacing:0.000px;">8</div>
<div style="position:absolute;right:889.30px;top:891.67px;font-size:13.5px;line-height:1;color:#2d5a36;white-space:pre;letter-spacing:0.000px;">8</div>
<div style="position:absolute;right:785.07px;top:891.67px;font-size:13.5px;line-height:1;color:#454545;white-space:pre;letter-spacing:-1.069px;">105,320</div>
<div style="position:absolute;right:699.07px;top:891.67px;font-size:13.5px;line-height:1;color:#2d5a36;white-space:pre;letter-spacing:-1.069px;">842,560</div>
<div style="position:absolute;right:567.08px;top:891.67px;font-size:13.5px;line-height:1;color:#c0894a;white-space:pre;letter-spacing:-1.079px;">89,249</div>
<div style="position:absolute;right:320.10px;top:891.67px;font-size:13.5px;line-height:1;color:#2d5a36;white-space:pre;letter-spacing:-1.099px;">106,8</div>
<div style="position:absolute;left:1298.0px;top:891.67px;font-size:13.5px;line-height:1;color:#2d5a36;white-space:pre;letter-spacing:-0.509px;">(БП)КОЛБАСА С<span class="e">...</span></div>
<div style="position:absolute;left:1412.0px;top:891.67px;font-size:13.5px;line-height:1;color:#2d5a36;white-space:pre;letter-spacing:-0.150px;">Формовка</div>
<div style="position:absolute;left:57.5px;top:908.0px;width:664.5px;height:21.0px;background:#abfda5"></div>
<div style="position:absolute;left:722.0px;top:908.0px;width:105.8px;height:21.0px;background:#edf5fd"></div>
<div style="position:absolute;left:827.8px;top:908.0px;width:708.8px;height:21.0px;background:#abfda5"></div>
<div style="position:absolute;left:57.5px;top:928.0px;width:1479.1px;height:2.0px;background:rgba(255,255,255,0.22)"></div>
<svg style="position:absolute;left:64.4px;top:912.5px" width="12" height="12" viewBox="0 0 12 12"><circle cx="6" cy="6" r="4.7" fill="#e4fbe1" stroke="#7f9a80" stroke-width="1"/><path d="M3.4 6H8.6M6 3.4V8.6" stroke="#4f6a50" stroke-width="1"/></svg>
<svg style="position:absolute;left:85.0px;top:910.3px" width="17" height="16" viewBox="0 0 17 16"><rect x="0.2" y="4" width="2.8" height="8" rx="0.6" fill="#5a9fc2"/><path d="M4.2 4.2H9V0.8L16.4 8L9 15.2V11.8H4.2Z" fill="#7ebcd8" stroke="#66a9cb" stroke-width="0.7" stroke-linejoin="round"/></svg>
<div style="position:absolute;left:109.7px;top:912.44px;font-size:13.5px;line-height:1;color:#2d5a36;white-space:pre;letter-spacing:-0.675px;">(БП)КОЛБАСА СЫРОКО<span class="e">...</span></div>
<div style="position:absolute;left:275.6px;top:912.44px;font-size:13.5px;line-height:1;color:#2d5a36;white-space:pre;letter-spacing:-0.079px;">Формовка</div>
<div style="position:absolute;left:368.8px;top:912.44px;font-size:13.5px;line-height:1;color:#2d5a36;white-space:pre;letter-spacing:0.356px;">кг</div>
<div style="position:absolute;right:1055.67px;top:912.44px;font-size:13.5px;line-height:1;color:#2d5a36;white-space:pre;letter-spacing:-1.069px;">743,436</div>
<div style="position:absolute;right:985.00px;top:912.44px;font-size:13.5px;line-height:1;color:#c0894a;white-space:pre;letter-spacing:0.000px;">8</div>
<div style="position:absolute;right:889.30px;top:912.44px;font-size:13.5px;line-height:1;color:#2d5a36;white-space:pre;letter-spacing:0.000px;">8</div>
<div style="position:absolute;right:785.07px;top:912.44px;font-size:13.5px;line-height:1;color:#454545;white-space:pre;letter-spacing:-1.069px;">105,320</div>
<div style="position:absolute;right:699.07px;top:912.44px;font-size:13.5px;line-height:1;color:#2d5a36;white-space:pre;letter-spacing:-1.069px;">842,560</div>
<div style="position:absolute;right:567.08px;top:912.44px;font-size:13.5px;line-height:1;color:#c0894a;white-space:pre;letter-spacing:-1.079px;">99,124</div>
<div style="position:absolute;right:320.10px;top:912.44px;font-size:13.5px;line-height:1;color:#2d5a36;white-space:pre;letter-spacing:-1.099px;">105,4</div>
<div style="position:absolute;left:1298.0px;top:912.44px;font-size:13.5px;line-height:1;color:#2d5a36;white-space:pre;letter-spacing:-0.509px;">(БП)КОЛБАСА С<span class="e">...</span></div>
<div style="position:absolute;left:1412.0px;top:912.44px;font-size:13.5px;line-height:1;color:#2d5a36;white-space:pre;letter-spacing:-0.150px;">Формовка</div>
</div>
<div style="position:absolute;left:57.5px;top:918.0px;width:1495.0px;height:16.0px;background:#fff"></div>
<div style="position:absolute;left:84.0px;top:921.0px;width:1426.0px;height:9.0px;background:#dadada;border-radius:5px"></div>
<div style="position:absolute;left:84.0px;top:921.0px;width:1336.0px;height:9.0px;background:#9d9d9d;border-radius:5px"></div>
<svg style="position:absolute;left:68.5px;top:922.5px" width="5" height="6" viewBox="0 0 5 6"><path d="M5 0V6L0 3Z" fill="#c8c8c8"/></svg>
<svg style="position:absolute;left:1521.3px;top:923.0px" width="4.6" height="5.2" viewBox="0 0 4.6 5.2"><path d="M0 0V5.2L4.6 2.6Z" fill="#5a5a5a"/></svg>
<div style="position:absolute;left:1537.6px;top:264.0px;width:15.5px;height:654.0px;background:#fff"></div>
<div style="position:absolute;left:1539.2px;top:268.0px;width:9.6px;height:624.0px;background:#d6d6d6;border-radius:5px"></div>
<div style="position:absolute;left:1539.2px;top:268.0px;width:9.6px;height:349.5px;background:#9a9a9a;border-radius:5px"></div>
<svg style="position:absolute;left:1542.0px;top:252.8px" width="5" height="4" viewBox="0 0 5 4"><path d="M0 4H5L2.5 0Z" fill="#bdbdbd"/></svg>
<svg style="position:absolute;left:1542.0px;top:902.7px" width="5" height="4.4" viewBox="0 0 5 4.4"><path d="M0 0H5L2.5 4.4Z" fill="#555"/></svg>
<svg style="position:absolute;left:0;top:0" width="1606" height="1013" viewBox="0 0 1606 1013"><path d="M526 138L651 237.5" stroke="#e2161c" stroke-width="3.2" fill="none"/><path d="M660 245L641.5 238.5L650.5 227.5Z" fill="#e2161c"/></svg>
</div></div>
</body></html>
